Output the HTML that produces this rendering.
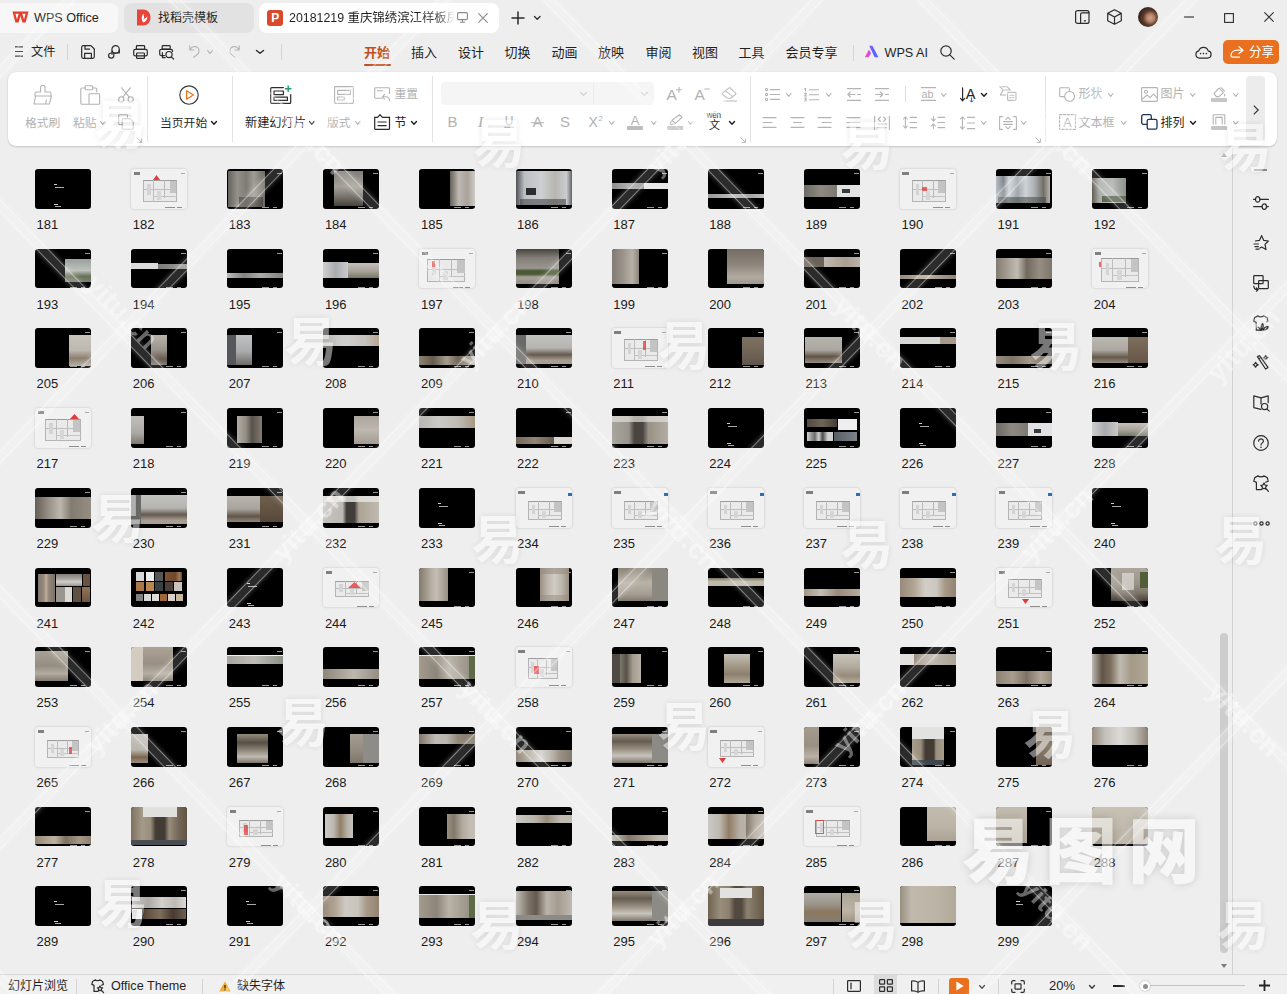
<!DOCTYPE html><html lang="zh-CN"><head><meta charset="utf-8"><title>WPS Office</title><style>
*{box-sizing:border-box}
html,body{margin:0;padding:0}
body{width:1287px;height:994px;overflow:hidden;background:#eee;position:relative;
 font-family:"Liberation Sans","Noto Sans CJK SC",sans-serif;}
.a{position:absolute;display:block}
.t{line-height:20px;white-space:nowrap}
svg{overflow:visible}
.th{position:absolute;width:56px;height:40px;border-radius:3px;overflow:hidden;background:#000}
.th i{position:absolute;display:block}
.th.p{background:#f1f1f1;box-shadow:0 0 2.5px rgba(0,0,0,.2)}
.n{position:absolute;font-size:13px;line-height:14px;color:#1a1a1a}
.g{stroke:#b4b4b4;fill:none;stroke-width:1.1;stroke-linecap:round;stroke-linejoin:round}
.d{stroke:#2b2b2b;fill:none;stroke-width:1.2;stroke-linecap:round;stroke-linejoin:round}
.wm{position:absolute;color:#fff;white-space:nowrap;pointer-events:none}
</style></head><body>
<div class="a" style="left:-8px;top:3px;width:126px;height:30px;background:#f7f7f7;border-radius:8px"></div>
<svg class="a" style="left:12px;top:11px;width:17px;height:12px" viewBox="0 0 17 12" ><path d="M0.5 0.5 H16.5 L13.6 11.5 H10.4 L8.5 5 L6.6 11.5 H3.4 Z M3.4 2.8 L5 8.6 L6.7 2.8 Z M10.3 2.8 L12 8.6 L13.6 2.8 Z" fill="#e2402a" fill-rule="evenodd"/></svg>
<div class="a t" style="left:34px;top:7.5px;font-size:12.6px;color:#1f1f1f;font-weight:400;">WPS Office</div>
<div class="a" style="left:124px;top:3px;width:130px;height:30px;background:#e2e2e2;border-radius:8px"></div>
<svg class="a" style="left:136px;top:9px;width:15px;height:17px" viewBox="0 0 15 17" ><path d="M1 0.5 H7 C11.5 0.5 14.5 3.8 14.5 8.5 C14.5 13.2 11.5 16.5 7 16.5 H1 Z" fill="#e8443a"/><path d="M7 13.5 C5 10 5.5 7 7.3 4.5 C7.8 7 8.6 8 7.6 10.5 C9 9.2 10.4 8.8 11.3 7.3 C11.6 10.6 9.8 12.8 7 13.5Z" fill="#fff"/></svg>
<div class="a t" style="left:158px;top:7.5px;font-size:12px;color:#222;font-weight:400;">找稻壳模板</div>
<div class="a" style="left:259px;top:3px;width:240px;height:30px;background:#fff;border-radius:8px"></div>
<svg class="a" style="left:267px;top:10px;width:16px;height:16px" viewBox="0 0 16 16" ><rect x="0" y="0" width="16" height="16" rx="3" fill="#d94a2c"/><text x="8.3" y="12.4" font-family="Liberation Sans, sans-serif" font-size="12" font-weight="700" fill="#fff" text-anchor="middle">P</text></svg>
<div class="a t" style="left:289px;top:7.5px;width:166px;overflow:hidden;font-size:12.4px;color:#1f1f1f;-webkit-mask-image:linear-gradient(90deg,#000 88%,transparent 100%);mask-image:linear-gradient(90deg,#000 88%,transparent 100%)">20181219 重庆锦绣滨江样板房</div>
<svg class="a" style="left:457px;top:12px;width:11px;height:11px" viewBox="0 0 11 11" ><rect x="0.6" y="0.6" width="9.8" height="7" rx="1.2" fill="none" stroke="#8a8a8a" stroke-width="1.1"/><path d="M5.5 7.6 V10 M3 10.3 H8" stroke="#8a8a8a" stroke-width="1.1" fill="none"/></svg>
<svg class="a" style="left:478px;top:13px;width:10px;height:10px" viewBox="0 0 10 10" ><path d="M0.7 0.7 L9.3 9.3 M9.3 0.7 L0.7 9.3" stroke="#8a8a8a" stroke-width="1.1" stroke-linecap="round"/></svg>
<svg class="a" style="left:510.5px;top:11px;width:14px;height:14px" viewBox="0 0 14 14" ><path d="M7 0.5 V13.5 M0.5 7 H13.5" stroke="#2b2b2b" stroke-width="1.5"/></svg>
<svg class="a" style="left:534px;top:16px;width:6.5px;height:4px" viewBox="0 0 6.5 4" ><path d="M0.5 0.5 L3.25 3.3 L6.0 0.5" fill="none" stroke="#2b2b2b" stroke-width="1.3" stroke-linecap="round" stroke-linejoin="round"/></svg>
<svg class="a" style="left:1075px;top:10px;width:15px;height:14px" viewBox="0 0 15 14" ><rect x="0.6" y="0.6" width="13.4" height="12.8" rx="2" class="d"/><path d="M5.6 13.4 V4.2 a1.4 1.4 0 0 1 1.4 -1.4 H14" class="d"/><path d="M9.2 10.8 H10.6" class="d"/></svg>
<svg class="a" style="left:1106.5px;top:9px;width:15px;height:16px" viewBox="0 0 15 16" ><path d="M7.5 0.7 L14.3 4.3 V11.7 L7.5 15.3 L0.7 11.7 V4.3 Z M0.9 4.4 L7.5 8 L14.1 4.4 M7.5 8 V15.2" class="d" stroke-width="1.15"/></svg>
<div class="a" style="left:1138px;top:7px;width:20px;height:20px;border-radius:50%;background:radial-gradient(circle at 62% 55%,#d0a68c 0,#b58468 22%,#5a3a2c 45%,#2f211c 75%);"></div>
<svg class="a" style="left:1184px;top:16px;width:10px;height:2px" viewBox="0 0 10 2" ><path d="M0 1 H10" stroke="#2b2b2b" stroke-width="1.1"/></svg>
<svg class="a" style="left:1224px;top:12.5px;width:10px;height:10px" viewBox="0 0 10 10" ><rect x="0.6" y="0.6" width="8.8" height="8.8" fill="none" stroke="#2b2b2b" stroke-width="1.1"/></svg>
<svg class="a" style="left:1264px;top:12px;width:10px;height:10px" viewBox="0 0 10 10" ><path d="M0.4 0.4 L9.6 9.6 M9.6 0.4 L0.4 9.6" stroke="#2b2b2b" stroke-width="1.1"/></svg>
<svg class="a" style="left:15px;top:46px;width:8px;height:11px" viewBox="0 0 8 11" ><path d="M0 0.8 H8 M0 5.5 H8 M0 10.2 H8" stroke="#2b2b2b" stroke-width="1.2"/></svg>
<div class="a t" style="left:31px;top:41.5px;font-size:12.2px;color:#1f1f1f;font-weight:400;">文件</div>
<div class="a" style="left:67px;top:44px;width:1px;height:16px;background:#d4d4d4"></div>
<svg class="a" style="left:81px;top:45px;width:14px;height:14px" viewBox="0 0 14 14" ><path d="M0.7 2.2 a1.5 1.5 0 0 1 1.5 -1.5 H10 L13.3 4 V11.8 a1.5 1.5 0 0 1 -1.5 1.5 H2.2 a1.5 1.5 0 0 1 -1.5 -1.5 Z" class="d"/><path d="M3.6 13 V8.4 H10.4 V13 M4 1 V4.2 H8.6" class="d"/></svg>
<svg class="a" style="left:107px;top:45px;width:14px;height:14px" viewBox="0 0 14 14" ><circle cx="8.6" cy="4.4" r="3.7" class="d"/><path d="M5 5.8 V9.2 M12.3 5 V8 H4.2 a2.6 2.6 0 1 0 2.6 2.6 V8" class="d"/></svg>
<svg class="a" style="left:133px;top:45px;width:15px;height:14px" viewBox="0 0 15 14" ><rect x="3.4" y="0.7" width="8.2" height="3.6" rx="0.8" class="d"/><rect x="0.7" y="4.3" width="13.6" height="6.6" rx="1.6" class="d"/><rect x="3.6" y="8" width="7.8" height="5.3" rx="0.6" fill="#eee" class="d"/></svg>
<svg class="a" style="left:158.5px;top:45px;width:16px;height:14px" viewBox="0 0 16 14" ><rect x="3.2" y="0.7" width="8" height="3.4" rx="0.8" class="d"/><path d="M5.5 10.6 H2.2 a1.5 1.5 0 0 1 -1.5 -1.5 V5.8 a1.5 1.5 0 0 1 1.5 -1.5 H12 a1.5 1.5 0 0 1 1.5 1.5 V6.4" class="d"/><path d="M3.4 7.6 V12.6 H6.2" class="d"/><circle cx="10" cy="9.6" r="3.1" class="d"/><path d="M12.3 11.9 L14.6 14" class="d"/></svg>
<svg class="a" style="left:189px;top:45px;width:11px;height:13px" viewBox="0 0 11 13" ><path d="M0.8 0.8 V5 H5 M1 4.8 C2.2 2.4 4.2 1.4 6.2 1.6 C8.8 1.9 10.3 4 10 6.4 C9.7 8.8 7.6 10.6 4.6 12.2" class="g" stroke="#b0b0b0" stroke-width="1.2"/></svg>
<svg class="a" style="left:207px;top:50px;width:6px;height:4px" viewBox="0 0 6 4" ><path d="M0.5 0.5 L3.0 3.3 L5.5 0.5" fill="none" stroke="#b0b0b0" stroke-width="1.1" stroke-linecap="round" stroke-linejoin="round"/></svg>
<svg class="a" style="left:229px;top:45px;width:11px;height:13px" viewBox="0 0 11 13" ><path d="M10.2 0.8 V5 H6 M10 4.8 C8.8 2.4 6.8 1.4 4.8 1.6 C2.2 1.9 0.7 4 1 6.4 C1.3 8.8 3.4 10.6 6.4 12.2" class="g" stroke="#b0b0b0" stroke-width="1.2"/></svg>
<svg class="a" style="left:256px;top:50px;width:8px;height:4px" viewBox="0 0 8 4" ><path d="M0.5 0.5 L4.0 3.3 L7.5 0.5" fill="none" stroke="#2b2b2b" stroke-width="1.4" stroke-linecap="round" stroke-linejoin="round"/></svg>
<div class="a" style="left:281px;top:44px;width:1px;height:16px;background:#d4d4d4"></div>
<div class="a t" style="left:364px;top:43.0px;font-size:13px;color:#c14f1d;font-weight:700;">开始</div>
<div class="a" style="left:364px;top:64px;width:27px;height:2px;background:#c14f1d;border-radius:1px"></div>
<div class="a t" style="left:411px;top:43.0px;font-size:13px;color:#1f1f1f;font-weight:400;">插入</div>
<div class="a t" style="left:458px;top:43.0px;font-size:13px;color:#1f1f1f;font-weight:400;">设计</div>
<div class="a t" style="left:504.5px;top:43.0px;font-size:13px;color:#1f1f1f;font-weight:400;">切换</div>
<div class="a t" style="left:551.5px;top:43.0px;font-size:13px;color:#1f1f1f;font-weight:400;">动画</div>
<div class="a t" style="left:598px;top:43.0px;font-size:13px;color:#1f1f1f;font-weight:400;">放映</div>
<div class="a t" style="left:645.5px;top:43.0px;font-size:13px;color:#1f1f1f;font-weight:400;">审阅</div>
<div class="a t" style="left:692px;top:43.0px;font-size:13px;color:#1f1f1f;font-weight:400;">视图</div>
<div class="a t" style="left:738.5px;top:43.0px;font-size:13px;color:#1f1f1f;font-weight:400;">工具</div>
<div class="a t" style="left:785.5px;top:43.0px;font-size:13px;color:#1f1f1f;font-weight:400;">会员专享</div>
<div class="a" style="left:853px;top:45px;width:1px;height:16px;background:#d4d4d4"></div>
<svg class="a" style="left:864px;top:45px;width:15px;height:13px" viewBox="0 0 15 13" ><defs><linearGradient id="ai1" x1="0" y1="0" x2="1" y2="1"><stop offset="0" stop-color="#7a5cff"/><stop offset="1" stop-color="#3d6bff"/></linearGradient><linearGradient id="ai2" x1="0" y1="0" x2="1" y2="0"><stop offset="0" stop-color="#ff4fa0"/><stop offset="1" stop-color="#c04bff"/></linearGradient></defs><path d="M5.2 0.8 H8.4 L14.4 12.2 H10.6 Z" fill="url(#ai1)"/><path d="M5 4.6 L7 8.2 L4.6 12.2 H0.8 Z" fill="url(#ai2)"/></svg>
<div class="a t" style="left:884.5px;top:42.5px;font-size:12.6px;color:#1f1f1f;font-weight:400;">WPS AI</div>
<svg class="a" style="left:940px;top:45px;width:15px;height:15px" viewBox="0 0 15 15" ><circle cx="6" cy="6" r="5.2" class="d"/><path d="M9.8 9.8 L14.2 14.2" class="d"/></svg>
<svg class="a" style="left:1195px;top:45px;width:17px;height:14px" viewBox="0 0 17 14" ><path d="M4.4 13.2 a3.7 3.7 0 0 1 -0.6 -7.3 a4.9 4.9 0 0 1 9.4 0 a3.7 3.7 0 0 1 -0.6 7.3 Z" class="d"/><circle cx="5.6" cy="8.6" r="0.8" fill="#2b2b2b"/><circle cx="8.5" cy="8.6" r="0.8" fill="#2b2b2b"/><circle cx="11.4" cy="8.6" r="0.8" fill="#2b2b2b"/></svg>
<div class="a" style="left:1223px;top:40px;width:56px;height:24px;background:#e9701e;border-radius:5px"></div>
<svg class="a" style="left:1230px;top:46px;width:14px;height:12px" viewBox="0 0 14 12" ><path d="M9 0.8 L13 4.2 L9 7.6 M12.6 4.2 H7.4 C3.6 4.2 1 6.4 1 9.4 C1 10.6 1.6 11.2 2.6 11.2 H9.4" fill="none" stroke="#fff" stroke-width="1.3" stroke-linecap="round" stroke-linejoin="round"/></svg>
<div class="a t" style="left:1249px;top:42.0px;font-size:12.6px;color:#fff;font-weight:400;">分享</div>
<div class="a" style="left:8px;top:72px;width:1269px;height:74px;background:#fff;border-radius:8px;box-shadow:0 1px 2px rgba(0,0,0,.16),0 0 1px rgba(0,0,0,.12)"></div>
<svg class="a" style="left:33px;top:85px;width:20px;height:20px" viewBox="0 0 20 20" ><path d="M7.6 7 V2.4 a2.2 2.2 0 0 1 4.4 0 V7 H16.6 a1.4 1.4 0 0 1 1.4 1.4 V11 H2 V8.4 A1.4 1.4 0 0 1 3.4 7 Z M2.6 11 L1 19 H16.4 L18.4 11 M12.6 19 L13.4 15" class="g"/></svg>
<div class="a t" style="left:25px;top:112.5px;font-size:11.8px;color:#b2b2b2;font-weight:400;">格式刷</div>
<svg class="a" style="left:79.5px;top:85px;width:21px;height:20px" viewBox="0 0 21 20" ><path d="M9 19.2 H2 a1.2 1.2 0 0 1 -1.2 -1.2 V4.2 A1.2 1.2 0 0 1 2 3 H5.2 M12.6 3 H15.6 a1.2 1.2 0 0 1 1.2 1.2 V7" class="g"/><rect x="5.2" y="0.8" width="7.4" height="4" rx="0.8" class="g"/><rect x="9" y="8.8" width="10.6" height="10.4" rx="0.8" class="g"/></svg>
<div class="a t" style="left:73px;top:112.5px;font-size:11.8px;color:#b2b2b2;font-weight:400;">粘贴</div>
<svg class="a" style="left:100px;top:121px;width:5.5px;height:4px" viewBox="0 0 5.5 4" ><path d="M0.5 0.5 L2.75 3.3 L5.0 0.5" fill="none" stroke="#b4b4b4" stroke-width="1.1" stroke-linecap="round" stroke-linejoin="round"/></svg>
<svg class="a" style="left:118px;top:86.5px;width:16px;height:16px" viewBox="0 0 16 16" ><circle cx="3.3" cy="12.4" r="2.6" class="g"/><circle cx="12.7" cy="12.4" r="2.6" class="g"/><path d="M4.8 10.2 L12.4 0.8 M11.2 10.2 L3.6 0.8" class="g"/></svg>
<svg class="a" style="left:118px;top:113.5px;width:16px;height:16px" viewBox="0 0 16 16" ><path d="M4.2 10.6 H1.6 a0.9 0.9 0 0 1 -0.9 -0.9 V1.6 A0.9 0.9 0 0 1 1.6 0.7 H8.6 a0.9 0.9 0 0 1 0.9 0.9 V3.8" class="g"/><path d="M5.2 4.6 H11.6 L15.3 8.2 V14.4 a0.9 0.9 0 0 1 -0.9 0.9 H5.2 a0.9 0.9 0 0 1 -0.9 -0.9 V5.5 a0.9 0.9 0 0 1 0.9 -0.9 Z" class="g"/></svg>
<svg class="a" style="left:136px;top:137px;width:6px;height:6px" viewBox="0 0 6 6" ><path d="M0.6 0.6 L5.2 5.2 M5.4 1.6 V5.4 H1.6" fill="none" stroke="#b8b8b8" stroke-width="1"/></svg>
<div class="a" style="left:146.5px;top:76px;width:1px;height:66px;background:#e3e3e3"></div>
<svg class="a" style="left:179px;top:85px;width:20px;height:20px" viewBox="0 0 20 20" ><circle cx="10" cy="10" r="9.2" fill="none" stroke="#3a3a3a" stroke-width="1.15"/><path d="M7.6 5.8 V14.2 L14.4 10 Z" fill="none" stroke="#e9701e" stroke-width="1.25" stroke-linejoin="round"/></svg>
<div class="a t" style="left:160px;top:112.5px;font-size:11.8px;color:#1f1f1f;font-weight:400;">当页开始</div>
<svg class="a" style="left:211px;top:121px;width:6px;height:4px" viewBox="0 0 6 4" ><path d="M0.5 0.5 L3.0 3.3 L5.5 0.5" fill="none" stroke="#1f1f1f" stroke-width="1.4" stroke-linecap="round" stroke-linejoin="round"/></svg>
<div class="a" style="left:231.5px;top:76px;width:1px;height:66px;background:#e3e3e3"></div>
<svg class="a" style="left:269.5px;top:85px;width:22px;height:19px" viewBox="0 0 22 19" ><path d="M13.4 2.6 H1.6 a0.9 0.9 0 0 0 -0.9 0.9 V17.4 a0.9 0.9 0 0 0 0.9 0.9 H19.8 a0.9 0.9 0 0 0 0.9 -0.9 V9.6" class="d" stroke="#333" stroke-width="1.25"/><rect x="4" y="6" width="9.4" height="3.6" class="d" stroke="#333" stroke-width="1.15"/><rect x="4" y="12.2" width="13.4" height="3.2" class="d" stroke="#333" stroke-width="1.15"/><path d="M18.2 0.6 V7 M15 3.8 H21.4" stroke="#1f9d6b" stroke-width="1.4" fill="none"/></svg>
<div class="a t" style="left:245px;top:112.5px;font-size:12.2px;color:#1f1f1f;font-weight:400;">新建幻灯片</div>
<svg class="a" style="left:308.5px;top:121px;width:5.5px;height:4px" viewBox="0 0 5.5 4" ><path d="M0.5 0.5 L2.75 3.3 L5.0 0.5" fill="none" stroke="#555" stroke-width="1.2" stroke-linecap="round" stroke-linejoin="round"/></svg>
<svg class="a" style="left:334px;top:86px;width:20px;height:18px" viewBox="0 0 20 18" ><rect x="0.6" y="0.6" width="18.8" height="16.8" rx="0.8" class="g"/><rect x="3.6" y="4.4" width="12.8" height="4" class="g"/><rect x="3.6" y="11" width="6.6" height="3" class="g"/></svg>
<div class="a t" style="left:327px;top:112.5px;font-size:11.8px;color:#b2b2b2;font-weight:400;">版式</div>
<svg class="a" style="left:354.5px;top:121px;width:5.5px;height:4px" viewBox="0 0 5.5 4" ><path d="M0.5 0.5 L2.75 3.3 L5.0 0.5" fill="none" stroke="#b4b4b4" stroke-width="1.1" stroke-linecap="round" stroke-linejoin="round"/></svg>
<svg class="a" style="left:373.5px;top:87px;width:17px;height:15px" viewBox="0 0 17 15" ><path d="M8 11.2 H1.6 a0.9 0.9 0 0 1 -0.9 -0.9 V1.6 A0.9 0.9 0 0 1 1.6 0.7 H14.6 a0.9 0.9 0 0 1 0.9 0.9 V6.4 M3.4 3.8 H8.8" class="g"/><path d="M10.6 7.4 L8.4 9.8 L10.6 12.2 M8.6 9.8 H12 C14.2 9.8 15.4 11.4 15.8 14" class="g"/></svg>
<div class="a t" style="left:394.5px;top:84.0px;font-size:11.8px;color:#b2b2b2;font-weight:400;">重置</div>
<svg class="a" style="left:373.5px;top:113.5px;width:17px;height:16px" viewBox="0 0 17 16" ><path d="M0.7 3.2 V14.4 a0.9 0.9 0 0 0 0.9 0.9 H14.6 a0.9 0.9 0 0 0 0.9 -0.9 V3.2 M0.7 3.4 H3.6 L6 0.7 L8.4 3.4 H15.5 M4 8 H12.2 M4 11.6 H12.2" class="d" stroke="#222" stroke-width="1.3"/></svg>
<div class="a t" style="left:394.5px;top:112.5px;font-size:12px;color:#1f1f1f;font-weight:400;">节</div>
<svg class="a" style="left:411px;top:121px;width:6px;height:4px" viewBox="0 0 6 4" ><path d="M0.5 0.5 L3.0 3.3 L5.5 0.5" fill="none" stroke="#1f1f1f" stroke-width="1.4" stroke-linecap="round" stroke-linejoin="round"/></svg>
<div class="a" style="left:432px;top:76px;width:1px;height:66px;background:#e3e3e3"></div>
<div class="a" style="left:441px;top:82px;width:213px;height:23px;background:#f5f5f5;border-radius:4px"></div>
<div class="a" style="left:593px;top:83px;width:1px;height:21px;background:#ececec"></div>
<svg class="a" style="left:580px;top:92px;width:7px;height:4px" viewBox="0 0 7 4" ><path d="M0.5 0.5 L3.5 3.3 L6.5 0.5" fill="none" stroke="#d0d0d0" stroke-width="1.1" stroke-linecap="round" stroke-linejoin="round"/></svg>
<svg class="a" style="left:641px;top:92px;width:7px;height:4px" viewBox="0 0 7 4" ><path d="M0.5 0.5 L3.5 3.3 L6.5 0.5" fill="none" stroke="#d0d0d0" stroke-width="1.1" stroke-linecap="round" stroke-linejoin="round"/></svg>
<svg class="a" style="left:448px;top:116px;width:9px;height:11px" viewBox="0 0 9 11" ><text x="-0.6" y="10.8" font-family="Liberation Sans, sans-serif" font-size="15" fill="#b2b2b2">B</text></svg>
<svg class="a" style="left:476.5px;top:116px;width:9px;height:11px" viewBox="0 0 9 11" ><text x="1" y="10.6" font-family="Liberation Serif, serif" font-style="italic" font-size="15.5" fill="#b2b2b2">I</text></svg>
<svg class="a" style="left:504px;top:116px;width:10px;height:12px" viewBox="0 0 10 12" ><text x="5" y="8.8" font-family="Liberation Sans, sans-serif" font-size="12" fill="#b2b2b2" text-anchor="middle">U</text><path d="M0.4 11.2 H9.6" class="g"/></svg>
<svg class="a" style="left:531px;top:116px;width:13px;height:12px" viewBox="0 0 13 12" ><text x="6.5" y="11" font-family="Liberation Sans, sans-serif" font-size="14.5" fill="#b2b2b2" text-anchor="middle">A</text><path d="M0.4 6.8 H12.6" class="g"/></svg>
<svg class="a" style="left:559.5px;top:116px;width:10px;height:11px" viewBox="0 0 10 11" ><text x="5" y="10.8" font-family="Liberation Sans, sans-serif" font-size="15" fill="#b2b2b2" text-anchor="middle">S</text></svg>
<svg class="a" style="left:588.5px;top:115px;width:14px;height:12px" viewBox="0 0 14 12" ><text x="-0.4" y="11.8" font-family="Liberation Sans, sans-serif" font-size="14" fill="#b2b2b2">X</text><text x="9.4" y="5.6" font-family="Liberation Sans, sans-serif" font-size="7.5" fill="#b2b2b2">2</text></svg>
<svg class="a" style="left:608.5px;top:121px;width:5.5px;height:4px" viewBox="0 0 5.5 4" ><path d="M0.5 0.5 L2.75 3.3 L5.0 0.5" fill="none" stroke="#b4b4b4" stroke-width="1.1" stroke-linecap="round" stroke-linejoin="round"/></svg>
<svg class="a" style="left:628px;top:114.5px;width:14px;height:10px" viewBox="0 0 14 10" ><text x="7" y="9.8" font-family="Liberation Sans, sans-serif" font-size="13" fill="#b2b2b2" text-anchor="middle">A</text></svg>
<div class="a" style="left:627px;top:125.5px;width:16px;height:4px;background:#bdbdbd;border-radius:1px"></div>
<svg class="a" style="left:650.5px;top:121px;width:5.5px;height:4px" viewBox="0 0 5.5 4" ><path d="M0.5 0.5 L2.75 3.3 L5.0 0.5" fill="none" stroke="#b4b4b4" stroke-width="1.1" stroke-linecap="round" stroke-linejoin="round"/></svg>
<svg class="a" style="left:667px;top:87px;width:15px;height:13px" viewBox="0 0 15 13" ><text x="-0.4" y="12.6" font-family="Liberation Sans, sans-serif" font-size="15.5" fill="#b2b2b2">A</text><path d="M12 0.4 V5.2 M9.6 2.8 H14.4" class="g" stroke-width="0.9"/></svg>
<svg class="a" style="left:695px;top:87px;width:15px;height:13px" viewBox="0 0 15 13" ><text x="-0.4" y="12.6" font-family="Liberation Sans, sans-serif" font-size="15.5" fill="#b2b2b2">A</text><path d="M9.8 2 H14.2" class="g" stroke-width="0.9"/></svg>
<svg class="a" style="left:720.5px;top:86.5px;width:17px;height:15px" viewBox="0 0 17 15" ><path d="M6.2 11.2 L1.4 7.4 a0.8 0.8 0 0 1 0 -1.2 L8 0.9 a0.9 0.9 0 0 1 1.2 0.1 L14.6 6.2 a0.8 0.8 0 0 1 -0.1 1.2 L9.6 11.2 Z M4.6 3.8 L11.6 9.6 M3 14 H15.6" class="g"/></svg>
<svg class="a" style="left:667px;top:113.5px;width:16px;height:11px" viewBox="0 0 16 11" ><path d="M3 10 L5 6.2 L12.6 0.8 L15 3.4 L8.4 9.4 L4.6 10.6 Z M5 6.2 L8.4 9.4" class="g"/></svg>
<div class="a" style="left:667px;top:125.5px;width:16px;height:4px;background:#c4c4c4;border-radius:1px"></div>
<svg class="a" style="left:688px;top:121px;width:5.5px;height:4px" viewBox="0 0 5.5 4" ><path d="M0.5 0.5 L2.75 3.3 L5.0 0.5" fill="none" stroke="#b4b4b4" stroke-width="1.1" stroke-linecap="round" stroke-linejoin="round"/></svg>
<div class="a t" style="left:706.5px;top:106.0px;font-size:8.2px;color:#1f1f1f;font-weight:400;letter-spacing:-.2px">wén</div>
<div class="a t" style="left:709px;top:115.0px;font-size:11px;color:#1f1f1f;font-weight:400;">文</div>
<svg class="a" style="left:728.5px;top:121px;width:6px;height:4px" viewBox="0 0 6 4" ><path d="M0.5 0.5 L3.0 3.3 L5.5 0.5" fill="none" stroke="#1f1f1f" stroke-width="1.4" stroke-linecap="round" stroke-linejoin="round"/></svg>
<svg class="a" style="left:740px;top:137px;width:6px;height:6px" viewBox="0 0 6 6" ><path d="M0.6 0.6 L5.2 5.2 M5.4 1.6 V5.4 H1.6" fill="none" stroke="#b8b8b8" stroke-width="1"/></svg>
<div class="a" style="left:749.5px;top:76px;width:1px;height:66px;background:#e3e3e3"></div>
<svg class="a" style="left:764.5px;top:88px;width:15px;height:13px" viewBox="0 0 15 13" ><circle cx="1.6" cy="1.6" r="1.1" class="g" stroke-width="0.9"/><circle cx="1.6" cy="6.5" r="1.1" class="g" stroke-width="0.9"/><circle cx="1.6" cy="11.4" r="1.1" class="g" stroke-width="0.9"/><path d="M5.4 1.6 H14.6 M5.4 6.5 H14.6 M5.4 11.4 H14.6" class="g"/></svg>
<svg class="a" style="left:785.5px;top:93px;width:5.5px;height:4px" viewBox="0 0 5.5 4" ><path d="M0.5 0.5 L2.75 3.3 L5.0 0.5" fill="none" stroke="#b4b4b4" stroke-width="1.1" stroke-linecap="round" stroke-linejoin="round"/></svg>
<svg class="a" style="left:804px;top:87.5px;width:15px;height:14px" viewBox="0 0 15 14" ><path d="M0.6 1 L1.6 0.4 V3 M0.6 5.6 C0.8 4.8 2.4 4.8 2.4 5.8 C2.4 6.6 0.8 7.4 0.6 8 H2.6 M0.6 10 H2.4 L1.4 11.2 C2.8 11.2 2.8 13.2 0.6 13" class="g" stroke-width="0.8"/><path d="M5.4 1.8 H14.6 M5.4 6.8 H14.6 M5.4 11.8 H14.6" class="g"/></svg>
<svg class="a" style="left:826px;top:93px;width:5.5px;height:4px" viewBox="0 0 5.5 4" ><path d="M0.5 0.5 L2.75 3.3 L5.0 0.5" fill="none" stroke="#b4b4b4" stroke-width="1.1" stroke-linecap="round" stroke-linejoin="round"/></svg>
<svg class="a" style="left:846.5px;top:88px;width:14px;height:13px" viewBox="0 0 14 13" ><path d="M0.4 0.6 H13.6 M0.4 12.4 H13.6 M1 6.5 H8 M3.4 4 L0.8 6.5 L3.4 9 M10.4 6.5 H13.6" class="g"/></svg>
<svg class="a" style="left:874.5px;top:88px;width:14px;height:13px" viewBox="0 0 14 13" ><path d="M0.4 0.6 H13.6 M0.4 12.4 H13.6 M0.6 6.5 H7.6 M5.2 4 L7.8 6.5 L5.2 9 M10.4 6.5 H13.6" class="g"/></svg>
<div class="a" style="left:904.5px;top:85.5px;width:1px;height:16.5px;background:#dcdcdc"></div>
<svg class="a" style="left:920.5px;top:87px;width:15px;height:14px" viewBox="0 0 15 14" ><path d="M0.4 0.6 H14.6 M0.4 13.4 H14.6" class="g"/></svg>
<div class="a t" style="left:921.5px;top:84.0px;font-size:10.8px;color:#b0b0b0;font-weight:400;">ab</div>
<svg class="a" style="left:941px;top:93px;width:5.5px;height:4px" viewBox="0 0 5.5 4" ><path d="M0.5 0.5 L2.75 3.3 L5.0 0.5" fill="none" stroke="#b4b4b4" stroke-width="1.1" stroke-linecap="round" stroke-linejoin="round"/></svg>
<svg class="a" style="left:959.5px;top:86.5px;width:17px;height:16px" viewBox="0 0 17 16" ><path d="M2.6 0.8 V13.8 M0.5 11.4 L2.6 13.9 L4.7 11.4" class="d" stroke="#222" stroke-width="1.2"/><text x="10.6" y="11.6" font-family="Liberation Sans, sans-serif" font-size="14.5" fill="#222" text-anchor="middle">A</text><path d="M11.6 10.4 V15 M10 13.4 L11.6 15.2 L13.2 13.4" fill="none" stroke="#2a62d4" stroke-width="1"/></svg>
<svg class="a" style="left:981px;top:93px;width:6px;height:4px" viewBox="0 0 6 4" ><path d="M0.5 0.5 L3.0 3.3 L5.5 0.5" fill="none" stroke="#1f1f1f" stroke-width="1.4" stroke-linecap="round" stroke-linejoin="round"/></svg>
<svg class="a" style="left:999px;top:86px;width:18px;height:15px" viewBox="0 0 18 15" ><path d="M0.8 0.7 H8 L11.4 4 H4.2 Z M4.2 4 L1.4 9 H6.8" class="g"/><rect x="8.6" y="6.4" width="8.4" height="8" rx="0.8" class="g"/><path d="M10.6 9.2 H15 M10.6 11.8 H15" class="g"/></svg>
<svg class="a" style="left:763px;top:116.5px;width:13px;height:11px" viewBox="0 0 13 11" ><path d="M0 0.6 H13 M0 5.5 H9 M0 10.4 H13 " class="g"/></svg>
<svg class="a" style="left:790.5px;top:116.5px;width:13px;height:11px" viewBox="0 0 13 11" ><path d="M0 0.6 H13 M2.5 5.5 H10.5 M0 10.4 H13 " class="g"/></svg>
<svg class="a" style="left:818px;top:116.5px;width:13px;height:11px" viewBox="0 0 13 11" ><path d="M0 0.6 H13 M4 5.5 H13 M0 10.4 H13 " class="g"/></svg>
<svg class="a" style="left:846.5px;top:116.5px;width:13px;height:11px" viewBox="0 0 13 11" ><path d="M0 0.6 H13 M0 5.5 H13 M0 10.4 H13 " class="g"/></svg>
<svg class="a" style="left:874px;top:115.5px;width:16px;height:14px" viewBox="0 0 16 14" ><path d="M0.6 0.4 V13.6 M15.4 0.4 V13.6 M3.6 8 H12.4 M3.6 11.8 H12.4 M6.4 1 L4.2 3.2 L6.4 5.4 M9.6 1 L11.8 3.2 L9.6 5.4" class="g"/></svg>
<svg class="a" style="left:903px;top:116px;width:14px;height:13px" viewBox="0 0 14 13" ><path d="M2.4 1 V12 M0.4 3 L2.4 0.8 L4.4 3 M0.4 10 L2.4 12.2 L4.4 10 M7 1.4 H13.6 M7 6.5 H13.6 M7 11.6 H13.6" class="g"/></svg>
<svg class="a" style="left:931px;top:116px;width:14px;height:13px" viewBox="0 0 14 13" ><path d="M2.4 0.6 V5 M0.4 3 L2.4 5.2 L4.4 3 M2.4 12.4 V8 M0.4 10 L2.4 7.8 L4.4 10 M7 1.4 H13.6 M7 6.5 H13.6 M7 11.6 H13.6" class="g"/></svg>
<svg class="a" style="left:960px;top:115.5px;width:15px;height:14px" viewBox="0 0 15 14" ><path d="M2.4 1 V13 M0.4 3 L2.4 0.8 L4.4 3 M0.4 11 L2.4 13.2 L4.4 11 M7.4 1.4 H14.6 M7.4 7 H14.6 M7.4 12.6 H14.6" class="g"/></svg>
<svg class="a" style="left:981px;top:121px;width:5.5px;height:4px" viewBox="0 0 5.5 4" ><path d="M0.5 0.5 L2.75 3.3 L5.0 0.5" fill="none" stroke="#b4b4b4" stroke-width="1.1" stroke-linecap="round" stroke-linejoin="round"/></svg>
<svg class="a" style="left:999px;top:115.5px;width:18px;height:14px" viewBox="0 0 18 14" ><path d="M3.4 0.6 H0.6 V13.4 H3.4 M14.6 0.6 H17.4 V13.4 H14.6 M4.6 5.6 H13.4 M4.6 8.4 H13.4 M6.8 3.4 L9 1.2 L11.2 3.4 M6.8 10.6 L9 12.8 L11.2 10.6" class="g"/></svg>
<svg class="a" style="left:1021px;top:121px;width:5.5px;height:4px" viewBox="0 0 5.5 4" ><path d="M0.5 0.5 L2.75 3.3 L5.0 0.5" fill="none" stroke="#b4b4b4" stroke-width="1.1" stroke-linecap="round" stroke-linejoin="round"/></svg>
<svg class="a" style="left:1035px;top:137px;width:6px;height:6px" viewBox="0 0 6 6" ><path d="M0.6 0.6 L5.2 5.2 M5.4 1.6 V5.4 H1.6" fill="none" stroke="#b8b8b8" stroke-width="1"/></svg>
<div class="a" style="left:1044.5px;top:76px;width:1px;height:66px;background:#e3e3e3"></div>
<svg class="a" style="left:1059px;top:86.5px;width:17px;height:15px" viewBox="0 0 17 15" ><path d="M5.6 9.6 H1.6 a0.9 0.9 0 0 1 -0.9 -0.9 V1.6 A0.9 0.9 0 0 1 1.6 0.7 H9.4 a0.9 0.9 0 0 1 0.9 0.9 V4.4" class="g"/><circle cx="10.6" cy="9.4" r="4.9" class="g"/></svg>
<div class="a t" style="left:1078.5px;top:84.0px;font-size:12px;color:#b2b2b2;font-weight:400;">形状</div>
<svg class="a" style="left:1108px;top:93px;width:5.5px;height:4px" viewBox="0 0 5.5 4" ><path d="M0.5 0.5 L2.75 3.3 L5.0 0.5" fill="none" stroke="#b4b4b4" stroke-width="1.1" stroke-linecap="round" stroke-linejoin="round"/></svg>
<svg class="a" style="left:1059px;top:114px;width:17px;height:16px" viewBox="0 0 17 16" ><rect x="0.6" y="0.6" width="15.8" height="14.8" class="g" stroke-dasharray="2.2 1.6"/><text x="8.5" y="12.6" font-family="Liberation Sans, sans-serif" font-size="12.5" fill="#b2b2b2" text-anchor="middle">A</text></svg>
<div class="a t" style="left:1078.5px;top:112.5px;font-size:12px;color:#b2b2b2;font-weight:400;">文本框</div>
<svg class="a" style="left:1120.5px;top:121px;width:5.5px;height:4px" viewBox="0 0 5.5 4" ><path d="M0.5 0.5 L2.75 3.3 L5.0 0.5" fill="none" stroke="#b4b4b4" stroke-width="1.1" stroke-linecap="round" stroke-linejoin="round"/></svg>
<svg class="a" style="left:1141px;top:86.5px;width:17px;height:15px" viewBox="0 0 17 15" ><rect x="0.6" y="0.6" width="15.8" height="13.8" rx="0.9" class="g"/><circle cx="5" cy="4.8" r="1.5" class="g"/><path d="M1 12.4 L6 8 L9 10.6 L12.4 7.2 L16.2 10.8" class="g"/></svg>
<div class="a t" style="left:1160.5px;top:84.0px;font-size:12px;color:#b2b2b2;font-weight:400;">图片</div>
<svg class="a" style="left:1190px;top:93px;width:5.5px;height:4px" viewBox="0 0 5.5 4" ><path d="M0.5 0.5 L2.75 3.3 L5.0 0.5" fill="none" stroke="#b4b4b4" stroke-width="1.1" stroke-linecap="round" stroke-linejoin="round"/></svg>
<svg class="a" style="left:1141px;top:114px;width:17px;height:16px" viewBox="0 0 17 16" ><rect x="0.7" y="0.7" width="9.6" height="9.6" rx="1.6" fill="#fff" stroke="#1d3557" stroke-width="1.3"/><rect x="6.2" y="5.4" width="9.8" height="9.8" rx="1.6" fill="#fff" stroke="#1d3557" stroke-width="1.3"/></svg>
<div class="a t" style="left:1160.5px;top:112.5px;font-size:12px;color:#1f1f1f;font-weight:400;">排列</div>
<svg class="a" style="left:1190px;top:121px;width:6px;height:4px" viewBox="0 0 6 4" ><path d="M0.5 0.5 L3.0 3.3 L5.5 0.5" fill="none" stroke="#1f1f1f" stroke-width="1.4" stroke-linecap="round" stroke-linejoin="round"/></svg>
<svg class="a" style="left:1212px;top:86.5px;width:14px;height:10px" viewBox="0 0 14 10" ><path d="M2 6.4 L7 1.2 L11.4 5.6 L7 9.6 H4.4 Z M9 0.6 L12.4 4 M12.6 7.4 V9" class="g"/></svg>
<div class="a" style="left:1211px;top:97.5px;width:16px;height:4px;background:#c6c6c6;border-radius:1px"></div>
<svg class="a" style="left:1232.5px;top:93px;width:5.5px;height:4px" viewBox="0 0 5.5 4" ><path d="M0.5 0.5 L2.75 3.3 L5.0 0.5" fill="none" stroke="#b4b4b4" stroke-width="1.1" stroke-linecap="round" stroke-linejoin="round"/></svg>
<svg class="a" style="left:1212px;top:114px;width:14px;height:10px" viewBox="0 0 14 10" ><path d="M1.2 10 V0.7 H12.8 V10 M3.8 10 V3.4 H10.2 V10" class="g"/></svg>
<div class="a" style="left:1211px;top:125.5px;width:16px;height:4px;background:#c6c6c6;border-radius:1px"></div>
<svg class="a" style="left:1232.5px;top:121px;width:5.5px;height:4px" viewBox="0 0 5.5 4" ><path d="M0.5 0.5 L2.75 3.3 L5.0 0.5" fill="none" stroke="#b4b4b4" stroke-width="1.1" stroke-linecap="round" stroke-linejoin="round"/></svg>
<div class="a" style="left:1246px;top:76px;width:19px;height:65px;background:#ececec;border-radius:4px"></div>
<svg class="a" style="left:1253px;top:104.5px;width:6px;height:10px" viewBox="0 0 6 10" ><path d="M0.8 0.6 L5.2 5 L0.8 9.4" fill="none" stroke="#333" stroke-width="1.2"/></svg>
<div class="a" style="left:1232px;top:148px;width:1px;height:827px;background:#d2d2d2"></div>
<svg class="a" style="left:1220.5px;top:153px;width:6px;height:4px" viewBox="0 0 6 4" ><path d="M0 4 L3 0 L6 4 Z" fill="#7a7a7a"/></svg>
<svg class="a" style="left:1220.5px;top:964px;width:6px;height:4px" viewBox="0 0 6 4" ><path d="M0 0 L3 4 L6 0 Z" fill="#7a7a7a"/></svg>
<div class="a" style="left:1220px;top:633px;width:7.5px;height:320px;background:#cdcdcd;border-radius:4px"></div>
<div class="a" style="left:1254px;top:169px;width:13px;height:2px;background:#8c8c8c"></div>
<svg class="a" style="left:1252.5px;top:196px;width:16px;height:14px" viewBox="0 0 16 14" ><path d="M0.6 3.4 H2.4 M7 3.4 H15.4 M0.6 10.6 H9 M13.6 10.6 H15.4" class="d"/><ellipse cx="4.7" cy="3.4" rx="2.2" ry="2.8" class="d"/><ellipse cx="11.3" cy="10.6" rx="2.2" ry="2.8" class="d"/></svg>
<svg class="a" style="left:1252.5px;top:235px;width:16px;height:16px" viewBox="0 0 16 16" ><path d="M8.6 0.8 L10.8 5.4 L15.4 6 L12 9.4 L13 14.6 L8.6 12 L7 13" class="d"/><path d="M8.6 0.8 L6.4 5.4 L2.4 6 M1 9 H5.4 M2 11.6 H5.4 M3 14.2 H6" class="d"/></svg>
<svg class="a" style="left:1252.5px;top:275px;width:16px;height:16px" viewBox="0 0 16 16" ><rect x="0.7" y="0.7" width="9.4" height="8" rx="0.8" class="d"/><rect x="5.6" y="5.6" width="9.7" height="8" rx="0.8" fill="#eee" class="d"/><path d="M0.8 11 C0.8 13.4 2 14.6 4.8 14.6 M3.4 12.8 L5.2 14.6 L3.4 16.2" class="d"/></svg>
<svg class="a" style="left:1252.5px;top:315px;width:17px;height:16px" viewBox="0 0 17 16" ><path d="M8 15.2 H3.2 V7.4 L0.8 6.2 L1.6 2.6 L5 0.8 C6 2.2 9.6 2.2 10.6 0.8 L14 2.6 L14.8 6.2 L13.6 6.8" class="d"/><path d="M8.6 15 C7.6 12.4 8 10.4 9.6 8.6 C10.6 10.6 10.6 12.6 8.6 15 Z M10 15.2 C11 12.8 12.8 11.6 15.2 11.4 C15 13.6 13 15 10 15.2 Z M7.4 15.2 C7.2 13.6 6.4 12.6 5 12.2" class="d" stroke-width="1"/></svg>
<svg class="a" style="left:1252.5px;top:354.5px;width:17px;height:16px" viewBox="0 0 17 16" ><path d="M4.4 1.6 L6.6 0.6 L15 12.4 L12.6 14 Z M6 3.6 L8 2.4" class="d"/><path d="M12.6 0.6 L13.4 2 L14.8 2.6 L13.4 3.2 L12.6 4.6 L11.8 3.2 L10.4 2.6 L11.8 2 Z M2.6 7.4 L3.6 9 L5.2 9.8 L3.6 10.6 L2.6 12.2 L1.6 10.6 L0.2 9.8 L1.6 9 Z" class="d" stroke-width="1"/></svg>
<svg class="a" style="left:1252.5px;top:395px;width:17px;height:17px" viewBox="0 0 17 17" ><path d="M8 14.4 L0.8 12.6 V0.8 L8 2.8 L15.2 0.8 V7.6 M8 2.8 V9" class="d"/><circle cx="11.6" cy="11.6" r="3.1" class="d"/><path d="M13.9 13.9 L16.2 16.2" class="d"/></svg>
<svg class="a" style="left:1252.5px;top:435px;width:16px;height:16px" viewBox="0 0 16 16" ><circle cx="8" cy="8" r="7.3" class="d"/><path d="M5.6 6.2 C5.6 3.2 10.4 3.2 10.4 6.2 C10.4 7.8 8 8 8 10" class="d"/><circle cx="8" cy="12.2" r="0.8" fill="#2b2b2b"/></svg>
<svg class="a" style="left:1252.5px;top:475px;width:17px;height:17px" viewBox="0 0 17 17" ><path d="M8.4 14.6 H3.4 V7.4 L0.8 6.2 L1.8 2.6 L5.2 0.8 C6.2 2.2 9.8 2.2 10.8 0.8 L14.2 2.6 L15.2 6.2 L12.6 7.2" class="d"/><path d="M11 8 L12 10 L14.2 10.4 L12.6 12 L13 14.2 L11 13.2 L9 14.2 L9.4 12 L7.8 10.4 L10 10 Z M13.4 14 L15.4 16.4" class="d" stroke-width="1"/></svg>
<svg class="a" style="left:1252.5px;top:521px;width:17px;height:5px" viewBox="0 0 17 5" ><circle cx="2.4" cy="2.5" r="1.6" class="d" stroke-width="0.9"/><circle cx="8.5" cy="2.5" r="1.6" class="d" stroke-width="0.9"/><circle cx="14.6" cy="2.5" r="1.6" class="d" stroke-width="0.9"/></svg>
<div class="a" style="left:0;top:974px;width:1287px;height:20px;background:#f0f0f0;border-top:1px solid #d6d6d6"></div>
<div class="a t" style="left:8px;top:976.0px;font-size:12px;color:#1f1f1f;font-weight:400;">幻灯片浏览</div>
<div class="a" style="left:76px;top:979px;width:1px;height:15px;background:#d4d4d4"></div>
<svg class="a" style="left:91px;top:979px;width:14px;height:14px" viewBox="0 0 14 14" ><path d="M6.6 12.4 H3 V6.4 L0.8 5.4 L1.6 2.4 L4.4 0.8 C5.2 2 8 2 8.8 0.8 L11.6 2.4 L12.4 5.4 L10.6 6.2" class="d" stroke-width="1"/><path d="M9 7 L9.8 8.6 L11.6 8.9 L10.3 10.2 L10.6 12 L9 11.2 L7.4 12 L7.7 10.2 L6.4 8.9 L8.2 8.6 Z M11 11.8 L12.6 13.6" class="d" stroke-width="0.9"/></svg>
<div class="a t" style="left:111px;top:976.0px;font-size:12.6px;color:#1f1f1f;font-weight:400;">Office Theme</div>
<div class="a" style="left:202px;top:979px;width:1px;height:15px;background:#d4d4d4"></div>
<svg class="a" style="left:219px;top:981px;width:12px;height:11px" viewBox="0 0 12 11" ><path d="M6 0.4 L11.8 10.6 H0.2 Z" fill="#f0a92a"/><path d="M6 4 V7.4" stroke="#222" stroke-width="1.3"/><circle cx="6" cy="9" r="0.8" fill="#222"/></svg>
<div class="a t" style="left:237px;top:976.0px;font-size:12px;color:#1f1f1f;font-weight:400;">缺失字体</div>
<div class="a" style="left:833px;top:979px;width:1px;height:15px;background:#d4d4d4"></div>
<svg class="a" style="left:847px;top:980px;width:14px;height:12px" viewBox="0 0 14 12" ><rect x="0.6" y="0.6" width="12.8" height="10.8" rx="0.8" class="d"/><path d="M4 3.2 V8.8" class="d"/></svg>
<div class="a" style="left:874px;top:975px;width:23px;height:19px;background:#dcdcdc"></div>
<svg class="a" style="left:879px;top:979px;width:14px;height:13px" viewBox="0 0 14 13" ><rect x="0.6" y="0.6" width="5" height="4.6" rx="0.6" class="d"/><rect x="8.4" y="0.6" width="5" height="4.6" rx="0.6" class="d"/><rect x="0.6" y="7.8" width="5" height="4.6" rx="0.6" class="d"/><rect x="8.4" y="7.8" width="5" height="4.6" rx="0.6" class="d"/></svg>
<svg class="a" style="left:911px;top:980px;width:14px;height:13px" viewBox="0 0 14 13" ><path d="M7 2.4 C5 0.8 2.8 0.6 0.6 1 V11 C2.8 10.6 5 10.8 7 12.4 C9 10.8 11.2 10.6 13.4 11 V1 C11.2 0.6 9 0.8 7 2.4 Z M7 2.4 V12.2" class="d"/></svg>
<div class="a" style="left:938px;top:979px;width:1px;height:15px;background:#d4d4d4"></div>
<div class="a" style="left:949px;top:977.5px;width:20px;height:20px;background:#e9701e;border-radius:3px"></div>
<svg class="a" style="left:956px;top:981px;width:8px;height:10px" viewBox="0 0 8 10" ><path d="M0.4 0.4 L7.6 5 L0.4 9.6 Z" fill="#fff"/></svg>
<svg class="a" style="left:978.5px;top:985px;width:6px;height:4px" viewBox="0 0 6 4" ><path d="M0.5 0.5 L3.0 3.3 L5.5 0.5" fill="none" stroke="#333" stroke-width="1.3" stroke-linecap="round" stroke-linejoin="round"/></svg>
<div class="a" style="left:998px;top:979px;width:1px;height:15px;background:#d4d4d4"></div>
<svg class="a" style="left:1011px;top:980px;width:14px;height:13px" viewBox="0 0 14 13" ><path d="M0.7 4 V2 A1.3 1.3 0 0 1 2 0.7 H4 M10 0.7 H12 A1.3 1.3 0 0 1 13.3 2 V4 M13.3 9 V11 A1.3 1.3 0 0 1 12 12.3 H10 M4 12.3 H2 A1.3 1.3 0 0 1 0.7 11 V9" class="d"/><rect x="4" y="3.8" width="6" height="5.4" rx="0.6" class="d"/></svg>
<div class="a t" style="left:1049px;top:975.5px;font-size:13px;color:#1f1f1f;font-weight:400;">20%</div>
<svg class="a" style="left:1089px;top:985px;width:6px;height:4px" viewBox="0 0 6 4" ><path d="M0.5 0.5 L3.0 3.3 L5.5 0.5" fill="none" stroke="#333" stroke-width="1.3" stroke-linecap="round" stroke-linejoin="round"/></svg>
<div class="a" style="left:1113px;top:985px;width:12px;height:2px;background:#222"></div>
<div class="a" style="left:1148px;top:985px;width:97px;height:1.4px;background:#c4c4c4"></div>
<div class="a" style="left:1140px;top:981px;width:10px;height:10px;border-radius:50%;background:#fff;box-shadow:0 0 2px rgba(0,0,0,.35)"></div>
<div class="a" style="left:1142.5px;top:983.5px;width:5px;height:5px;border-radius:50%;background:#8c8c8c"></div>
<svg class="a" style="left:1259px;top:980px;width:11px;height:11px" viewBox="0 0 11 11" ><path d="M5.5 0 V11 M0 5.5 H11" stroke="#222" stroke-width="1.8"/></svg>
<div class="th" style="left:35.0px;top:169px;height:40px"><i style="left:19px;top:15px;width:3px;height:1px;background:#ccc"></i><i style="left:20px;top:18px;width:9px;height:1px;background:#aaa"></i><i style="left:19px;top:35px;width:4px;height:1px;background:#ccc"></i><i style="left:20px;top:37px;width:6px;height:1px;background:#aaa"></i></div><div class="n" style="left:36.6px;top:218px;color:#1a1a1a">181</div>
<div class="th p" style="left:131.1px;top:169px;height:40px"><i style="left:2.5px;top:2.5px;width:6.5px;height:3.5px;background:#808080"></i><i style="left:12px;top:11px;width:34px;height:22px;border:1px solid #b4b4b4;border-top:1.5px solid #9c9c9c;background:#eaeaea"></i><i style="left:22.2px;top:11px;width:1px;height:22px;background:#bdbdbd"></i><i style="left:33.08px;top:11px;width:1px;height:17.6px;background:#b8b8b8"></i><i style="left:12px;top:20.240000000000002px;width:27.200000000000003px;height:1px;background:#bdbdbd"></i><i style="left:22.2px;top:26.84px;width:23.799999999999997px;height:1px;background:#c2c2c2"></i><i style="left:16.08px;top:15.4px;width:3.4000000000000004px;height:11.0px;background:#d4d4d4"></i><i style="left:38.519999999999996px;top:12px;width:6.800000000000001px;height:12.100000000000001px;background:#c4c4c4"></i><i style="left:26.28px;top:22.0px;width:4.08px;height:8.8px;background:#d6d6d6"></i><i style="left:33.5px;top:38px;width:10px;height:1.3px;background:#8e8e8e"></i><i style="left:45.5px;top:38px;width:5px;height:1.3px;background:#8e8e8e"></i><i style="left:50px;top:4px;width:4px;height:1px;background:#aaa"></i><svg style="position:absolute;left:22px;top:6px;width:7px;height:5px" viewBox="0 0 10 10" preserveAspectRatio="none"><path d="M0 10 L5 0 L10 10 Z" fill="#e23b3b"/></svg></div><div class="n" style="left:132.7px;top:218px;color:#1a1a1a">182</div>
<div class="th" style="left:227.2px;top:169px;height:40px"><i style="left:50px;top:4px;width:5px;height:1px;background:#9a9a9a"></i><i style="left:35px;top:38px;width:7px;height:1px;background:#9a9a9a"></i><i style="left:46px;top:38px;width:4px;height:1px;background:#9a9a9a"></i><i style="left:1px;top:2px;width:37px;height:36px;background:linear-gradient(90deg,#6f6c67,#a29e97 25%,#8b8781 50%,#b0aca5 70%,#77736d);filter:brightness(.91)"></i><i style="left:12px;top:28px;width:24px;height:10px;background:rgba(40,36,32,.45)"></i></div><div class="n" style="left:228.79999999999998px;top:218px;color:#1a1a1a">183</div>
<div class="th" style="left:323.3px;top:169px;height:40px"><i style="left:50px;top:4px;width:5px;height:1px;background:#9a9a9a"></i><i style="left:35px;top:38px;width:7px;height:1px;background:#9a9a9a"></i><i style="left:46px;top:38px;width:4px;height:1px;background:#9a9a9a"></i><i style="left:11px;top:2px;width:29px;height:35px;background:linear-gradient(180deg,#8d8982,#b5b0a8 45%,#8a857d 70%,#4d4842);filter:brightness(.91)"></i></div><div class="n" style="left:324.90000000000003px;top:218px;color:#1a1a1a">184</div>
<div class="th" style="left:419.4px;top:169px;height:40px"><i style="left:50px;top:4px;width:5px;height:1px;background:#9a9a9a"></i><i style="left:35px;top:38px;width:7px;height:1px;background:#9a9a9a"></i><i style="left:46px;top:38px;width:4px;height:1px;background:#9a9a9a"></i><i style="left:31px;top:2px;width:25px;height:35px;background:linear-gradient(90deg,#6f6962,#cfcac3 35%,#b9b3aa 70%,#e2dfda);filter:brightness(.91)"></i></div><div class="n" style="left:421.0px;top:218px;color:#1a1a1a">185</div>
<div class="th" style="left:515.5px;top:169px;height:40px"><i style="left:50px;top:4px;width:5px;height:1px;background:#9a9a9a"></i><i style="left:35px;top:38px;width:7px;height:1px;background:#9a9a9a"></i><i style="left:46px;top:38px;width:4px;height:1px;background:#9a9a9a"></i><i style="left:0px;top:2px;width:56px;height:34px;background:linear-gradient(90deg,#55585c,#cfd3d7 15%,#e1e3e5 45%,#c9c7c2 70%,#dfe1e4 90%,#6a6c70);filter:brightness(.91)"></i><i style="left:10px;top:19px;width:10px;height:7px;background:#2c2c2e"></i><i style="left:4px;top:30px;width:46px;height:6px;background:rgba(60,60,62,.55)"></i></div><div class="n" style="left:517.1px;top:218px;color:#1a1a1a">186</div>
<div class="th" style="left:611.6px;top:169px;height:40px"><i style="left:50px;top:4px;width:5px;height:1px;background:#9a9a9a"></i><i style="left:35px;top:38px;width:7px;height:1px;background:#9a9a9a"></i><i style="left:46px;top:38px;width:4px;height:1px;background:#9a9a9a"></i><i style="left:0px;top:14px;width:32px;height:6px;background:linear-gradient(90deg,#9d9d9d,#bdbdbd 50%,#a5a5a5);filter:brightness(.91)"></i><i style="left:32px;top:14px;width:24px;height:6px;background:#e6e8ea"></i></div><div class="n" style="left:613.2px;top:218px;color:#1a1a1a">187</div>
<div class="th" style="left:707.7px;top:169px;height:40px"><i style="left:50px;top:4px;width:5px;height:1px;background:#9a9a9a"></i><i style="left:35px;top:38px;width:7px;height:1px;background:#9a9a9a"></i><i style="left:46px;top:38px;width:4px;height:1px;background:#9a9a9a"></i><i style="left:0px;top:24.5px;width:56px;height:4.300000000000001px;background:linear-gradient(90deg,#a8a8a8,#c9c9c9 40%,#b0b0b0 70%,#d0d0d0);filter:brightness(.91)"></i></div><div class="n" style="left:709.3000000000001px;top:218px;color:#1a1a1a">188</div>
<div class="th" style="left:803.8px;top:169px;height:40px"><i style="left:50px;top:4px;width:5px;height:1px;background:#9a9a9a"></i><i style="left:35px;top:38px;width:7px;height:1px;background:#9a9a9a"></i><i style="left:46px;top:38px;width:4px;height:1px;background:#9a9a9a"></i><i style="left:0px;top:16px;width:33px;height:12px;background:linear-gradient(90deg,#77736d,#9c978f 50%,#8a857d);filter:brightness(.91)"></i><i style="left:33px;top:16px;width:23px;height:12px;background:#e0e2e4"></i><i style="left:38px;top:20px;width:8px;height:4px;background:#3a3a3c"></i></div><div class="n" style="left:805.4px;top:218px;color:#1a1a1a">189</div>
<div class="th p" style="left:899.9px;top:169px;height:40px"><i style="left:2.5px;top:2.5px;width:6.5px;height:3.5px;background:#808080"></i><i style="left:12px;top:11px;width:34px;height:22px;border:1px solid #b4b4b4;border-top:1.5px solid #9c9c9c;background:#eaeaea"></i><i style="left:22.2px;top:11px;width:1px;height:22px;background:#bdbdbd"></i><i style="left:33.08px;top:11px;width:1px;height:17.6px;background:#b8b8b8"></i><i style="left:12px;top:20.240000000000002px;width:27.200000000000003px;height:1px;background:#bdbdbd"></i><i style="left:22.2px;top:26.84px;width:23.799999999999997px;height:1px;background:#c2c2c2"></i><i style="left:16.08px;top:15.4px;width:3.4000000000000004px;height:11.0px;background:#d4d4d4"></i><i style="left:38.519999999999996px;top:12px;width:6.800000000000001px;height:12.100000000000001px;background:#c4c4c4"></i><i style="left:26.28px;top:22.0px;width:4.08px;height:8.8px;background:#d6d6d6"></i><i style="left:33.5px;top:38px;width:10px;height:1.3px;background:#8e8e8e"></i><i style="left:45.5px;top:38px;width:5px;height:1.3px;background:#8e8e8e"></i><i style="left:50px;top:4px;width:4px;height:1px;background:#aaa"></i><i style="left:22px;top:18px;width:5px;height:4px;background:rgba(226,59,59,.75)"></i></div><div class="n" style="left:901.5px;top:218px;color:#1a1a1a">190</div>
<div class="th" style="left:996.0px;top:169px;height:40px"><i style="left:50px;top:4px;width:5px;height:1px;background:#9a9a9a"></i><i style="left:35px;top:38px;width:7px;height:1px;background:#9a9a9a"></i><i style="left:46px;top:38px;width:4px;height:1px;background:#9a9a9a"></i><i style="left:0px;top:7px;width:54px;height:27px;background:linear-gradient(90deg,#c9d0d6,#8f969c 14%,#dfe5ea 24%,#aeb6bd 40%,#e2e7eb 55%,#b9bfc4 72%,#7e7a70 88%,#c9c6bf);filter:brightness(.91)"></i><i style="left:2px;top:28px;width:48px;height:6px;background:rgba(70,72,70,.55)"></i></div><div class="n" style="left:997.6px;top:218px;color:#1a1a1a">191</div>
<div class="th" style="left:1092.1px;top:169px;height:40px"><i style="left:50px;top:4px;width:5px;height:1px;background:#9a9a9a"></i><i style="left:35px;top:38px;width:7px;height:1px;background:#9a9a9a"></i><i style="left:46px;top:38px;width:4px;height:1px;background:#9a9a9a"></i><i style="left:0px;top:9px;width:34px;height:25px;background:linear-gradient(90deg,#6d675c,#b9beb9 22%,#c9cdc9 60%,#9aa09a);filter:brightness(.91)"></i><i style="left:10px;top:27px;width:24px;height:6px;background:#5f6652"></i></div><div class="n" style="left:1093.6999999999998px;top:218px;color:#1a1a1a">192</div>
<div class="th" style="left:35.0px;top:249px;height:39px"><i style="left:50px;top:4px;width:5px;height:1px;background:#9a9a9a"></i><i style="left:35px;top:38px;width:7px;height:1px;background:#9a9a9a"></i><i style="left:46px;top:38px;width:4px;height:1px;background:#9a9a9a"></i><i style="left:30px;top:10px;width:26px;height:23px;background:linear-gradient(180deg,#aab0ab,#cfd4cf 50%,#6f7d5d 75%,#8a8a80);filter:brightness(.91)"></i></div><div class="n" style="left:36.6px;top:298px;color:#1a1a1a">193</div>
<div class="th" style="left:131.1px;top:249px;height:39px"><i style="left:50px;top:4px;width:5px;height:1px;background:#9a9a9a"></i><i style="left:35px;top:38px;width:7px;height:1px;background:#9a9a9a"></i><i style="left:46px;top:38px;width:4px;height:1px;background:#9a9a9a"></i><i style="left:0px;top:14px;width:27px;height:6px;background:#d9dadb"></i><i style="left:27px;top:15px;width:29px;height:5px;background:linear-gradient(90deg,#8a8986,#a9a8a4);filter:brightness(.91)"></i></div><div class="n" style="left:132.7px;top:298px;color:#1a1a1a">194</div>
<div class="th" style="left:227.2px;top:249px;height:39px"><i style="left:50px;top:4px;width:5px;height:1px;background:#9a9a9a"></i><i style="left:35px;top:38px;width:7px;height:1px;background:#9a9a9a"></i><i style="left:46px;top:38px;width:4px;height:1px;background:#9a9a9a"></i><i style="left:0px;top:24px;width:56px;height:5px;background:linear-gradient(90deg,#cfcfcf,#8f928c 30%,#bdbdb8 60%,#8d9088);filter:brightness(.91)"></i></div><div class="n" style="left:228.79999999999998px;top:298px;color:#1a1a1a">195</div>
<div class="th" style="left:323.3px;top:249px;height:39px"><i style="left:50px;top:4px;width:5px;height:1px;background:#9a9a9a"></i><i style="left:35px;top:38px;width:7px;height:1px;background:#9a9a9a"></i><i style="left:46px;top:38px;width:4px;height:1px;background:#9a9a9a"></i><i style="left:0px;top:13px;width:25px;height:16px;background:linear-gradient(90deg,#e4e4e4,#b9bcc0 50%,#dedede);filter:brightness(.91)"></i><i style="left:25px;top:14px;width:31px;height:15px;background:linear-gradient(180deg,#d8d4cc,#b8b2a7 55%,#7f8470);filter:brightness(.91)"></i></div><div class="n" style="left:324.90000000000003px;top:298px;color:#1a1a1a">196</div>
<div class="th p" style="left:419.4px;top:249px;height:39px"><i style="left:2.5px;top:2.5px;width:6.5px;height:3.5px;background:#808080"></i><i style="left:8px;top:10px;width:38px;height:23px;border:1px solid #b4b4b4;border-top:1.5px solid #9c9c9c;background:#eaeaea"></i><i style="left:19.4px;top:10px;width:1px;height:23px;background:#bdbdbd"></i><i style="left:31.56px;top:10px;width:1px;height:18.400000000000002px;background:#b8b8b8"></i><i style="left:8px;top:19.66px;width:30.400000000000002px;height:1px;background:#bdbdbd"></i><i style="left:19.4px;top:26.56px;width:26.599999999999998px;height:1px;background:#c2c2c2"></i><i style="left:12.559999999999999px;top:14.600000000000001px;width:3.8000000000000003px;height:11.5px;background:#d4d4d4"></i><i style="left:37.64px;top:11px;width:7.6000000000000005px;height:12.65px;background:#c4c4c4"></i><i style="left:23.96px;top:21.5px;width:4.56px;height:9.200000000000001px;background:#d6d6d6"></i><i style="left:33.5px;top:38px;width:10px;height:1.3px;background:#8e8e8e"></i><i style="left:45.5px;top:38px;width:5px;height:1.3px;background:#8e8e8e"></i><i style="left:50px;top:4px;width:4px;height:1px;background:#aaa"></i><i style="left:13px;top:12px;width:3px;height:6px;background:rgba(226,59,59,.75)"></i></div><div class="n" style="left:421.0px;top:298px;color:#1a1a1a">197</div>
<div class="th" style="left:515.5px;top:249px;height:39px"><i style="left:50px;top:4px;width:5px;height:1px;background:#9a9a9a"></i><i style="left:35px;top:38px;width:7px;height:1px;background:#9a9a9a"></i><i style="left:46px;top:38px;width:4px;height:1px;background:#9a9a9a"></i><i style="left:0px;top:0px;width:43px;height:35px;background:linear-gradient(180deg,#4f4a45,#8f8a84 25%,#aaa59e 55%,#52623b 62%,#52623b 72%,#b7b0a7 80%,#a09a92);filter:brightness(.91)"></i></div><div class="n" style="left:517.1px;top:298px;color:#1a1a1a">198</div>
<div class="th" style="left:611.6px;top:249px;height:39px"><i style="left:50px;top:4px;width:5px;height:1px;background:#9a9a9a"></i><i style="left:35px;top:38px;width:7px;height:1px;background:#9a9a9a"></i><i style="left:46px;top:38px;width:4px;height:1px;background:#9a9a9a"></i><i style="left:0px;top:0px;width:27px;height:35px;background:linear-gradient(90deg,#8f877e,#a9a198 40%,#c9c2b8 75%,#9a9288);filter:brightness(.91)"></i></div><div class="n" style="left:613.2px;top:298px;color:#1a1a1a">199</div>
<div class="th" style="left:707.7px;top:249px;height:39px"><i style="left:50px;top:4px;width:5px;height:1px;background:#9a9a9a"></i><i style="left:35px;top:38px;width:7px;height:1px;background:#9a9a9a"></i><i style="left:46px;top:38px;width:4px;height:1px;background:#9a9a9a"></i><i style="left:19px;top:0px;width:37px;height:35px;background:linear-gradient(180deg,#7f776d,#9c9389 45%,#c3bbb0 80%,#b0a89d);filter:brightness(.91)"></i></div><div class="n" style="left:709.3000000000001px;top:298px;color:#1a1a1a">200</div>
<div class="th" style="left:803.8px;top:249px;height:39px"><i style="left:50px;top:4px;width:5px;height:1px;background:#9a9a9a"></i><i style="left:35px;top:38px;width:7px;height:1px;background:#9a9a9a"></i><i style="left:46px;top:38px;width:4px;height:1px;background:#9a9a9a"></i><i style="left:0px;top:8px;width:20px;height:10px;background:#6b6259"></i><i style="left:20px;top:8px;width:36px;height:10px;background:linear-gradient(90deg,#d6cdc1,#b9ae9f 60%,#cfc6ba);filter:brightness(.91)"></i></div><div class="n" style="left:805.4px;top:298px;color:#1a1a1a">201</div>
<div class="th" style="left:899.9px;top:249px;height:39px"><i style="left:50px;top:4px;width:5px;height:1px;background:#9a9a9a"></i><i style="left:35px;top:38px;width:7px;height:1px;background:#9a9a9a"></i><i style="left:46px;top:38px;width:4px;height:1px;background:#9a9a9a"></i><i style="left:0px;top:26px;width:56px;height:4px;background:linear-gradient(90deg,#a89a8b,#c9bcab 50%,#9d8f80);filter:brightness(.91)"></i></div><div class="n" style="left:901.5px;top:298px;color:#1a1a1a">202</div>
<div class="th" style="left:996.0px;top:249px;height:39px"><i style="left:50px;top:4px;width:5px;height:1px;background:#9a9a9a"></i><i style="left:35px;top:38px;width:7px;height:1px;background:#9a9a9a"></i><i style="left:46px;top:38px;width:4px;height:1px;background:#9a9a9a"></i><i style="left:0px;top:9px;width:56px;height:21px;background:linear-gradient(90deg,#8f877b,#b8b0a4 22%,#d3cdc2 38%,#7d7468 55%,#a59c8f 78%,#8a8175);filter:brightness(.91)"></i></div><div class="n" style="left:997.6px;top:298px;color:#1a1a1a">203</div>
<div class="th p" style="left:1092.1px;top:249px;height:39px"><i style="left:2.5px;top:2.5px;width:6.5px;height:3.5px;background:#808080"></i><i style="left:9px;top:9px;width:38px;height:24px;border:1px solid #b4b4b4;border-top:1.5px solid #9c9c9c;background:#eaeaea"></i><i style="left:20.4px;top:9px;width:1px;height:24px;background:#bdbdbd"></i><i style="left:32.56px;top:9px;width:1px;height:19.200000000000003px;background:#b8b8b8"></i><i style="left:9px;top:19.08px;width:30.400000000000002px;height:1px;background:#bdbdbd"></i><i style="left:20.4px;top:26.28px;width:26.599999999999998px;height:1px;background:#c2c2c2"></i><i style="left:13.559999999999999px;top:13.8px;width:3.8000000000000003px;height:12.0px;background:#d4d4d4"></i><i style="left:38.64px;top:10px;width:7.6000000000000005px;height:13.200000000000001px;background:#c4c4c4"></i><i style="left:24.96px;top:21.0px;width:4.56px;height:9.600000000000001px;background:#d6d6d6"></i><i style="left:33.5px;top:38px;width:10px;height:1.3px;background:#8e8e8e"></i><i style="left:45.5px;top:38px;width:5px;height:1.3px;background:#8e8e8e"></i><i style="left:50px;top:4px;width:4px;height:1px;background:#aaa"></i><i style="left:7px;top:13px;width:2px;height:5px;background:rgba(226,59,59,.75)"></i></div><div class="n" style="left:1093.6999999999998px;top:298px;color:#1a1a1a">204</div>
<div class="th" style="left:35.0px;top:328px;height:40px"><i style="left:50px;top:4px;width:5px;height:1px;background:#9a9a9a"></i><i style="left:35px;top:38px;width:7px;height:1px;background:#9a9a9a"></i><i style="left:46px;top:38px;width:4px;height:1px;background:#9a9a9a"></i><i style="left:34px;top:7px;width:22px;height:31px;background:linear-gradient(180deg,#dbd7d0,#cfcac1 50%,#9a8b78 75%,#c9c2b7);filter:brightness(.91)"></i></div><div class="n" style="left:36.6px;top:377px;color:#1a1a1a">205</div>
<div class="th" style="left:131.1px;top:328px;height:40px"><i style="left:50px;top:4px;width:5px;height:1px;background:#9a9a9a"></i><i style="left:35px;top:38px;width:7px;height:1px;background:#9a9a9a"></i><i style="left:46px;top:38px;width:4px;height:1px;background:#9a9a9a"></i><i style="left:20px;top:7px;width:16px;height:30px;background:linear-gradient(180deg,#c9c4bc,#a9a298 50%,#6f6358 80%,#8d8479);filter:brightness(.91)"></i></div><div class="n" style="left:132.7px;top:377px;color:#1a1a1a">206</div>
<div class="th" style="left:227.2px;top:328px;height:40px"><i style="left:50px;top:4px;width:5px;height:1px;background:#9a9a9a"></i><i style="left:35px;top:38px;width:7px;height:1px;background:#9a9a9a"></i><i style="left:46px;top:38px;width:4px;height:1px;background:#9a9a9a"></i><i style="left:0px;top:7px;width:9px;height:30px;background:#55575a"></i><i style="left:9px;top:7px;width:16px;height:30px;background:linear-gradient(180deg,#d3d5d7,#b9bbbd 55%,#7b766f);filter:brightness(.91)"></i></div><div class="n" style="left:228.79999999999998px;top:377px;color:#1a1a1a">207</div>
<div class="th" style="left:323.3px;top:328px;height:40px"><i style="left:50px;top:4px;width:5px;height:1px;background:#9a9a9a"></i><i style="left:35px;top:38px;width:7px;height:1px;background:#9a9a9a"></i><i style="left:46px;top:38px;width:4px;height:1px;background:#9a9a9a"></i><i style="left:0px;top:7px;width:56px;height:11px;background:linear-gradient(90deg,#cfcfcd,#e4e4e2 40%,#d9d6cf 75%,#c9b99f);filter:brightness(.91)"></i></div><div class="n" style="left:324.90000000000003px;top:377px;color:#1a1a1a">208</div>
<div class="th" style="left:419.4px;top:328px;height:40px"><i style="left:50px;top:4px;width:5px;height:1px;background:#9a9a9a"></i><i style="left:35px;top:38px;width:7px;height:1px;background:#9a9a9a"></i><i style="left:46px;top:38px;width:4px;height:1px;background:#9a9a9a"></i><i style="left:0px;top:28px;width:56px;height:9px;background:linear-gradient(90deg,#9d917f,#6f6557 25%,#b9ad9b 50%,#74695b 70%,#c9c1b3);filter:brightness(.91)"></i></div><div class="n" style="left:421.0px;top:377px;color:#1a1a1a">209</div>
<div class="th" style="left:515.5px;top:328px;height:40px"><i style="left:50px;top:4px;width:5px;height:1px;background:#9a9a9a"></i><i style="left:35px;top:38px;width:7px;height:1px;background:#9a9a9a"></i><i style="left:46px;top:38px;width:4px;height:1px;background:#9a9a9a"></i><i style="left:0px;top:7px;width:10px;height:29px;background:#6a6a68"></i><i style="left:10px;top:7px;width:46px;height:29px;background:linear-gradient(180deg,#d6d6d4,#c6c5c1 45%,#6f6358 68%,#b9ae9f 88%);filter:brightness(.91)"></i></div><div class="n" style="left:517.1px;top:377px;color:#1a1a1a">210</div>
<div class="th p" style="left:611.6px;top:328px;height:40px"><i style="left:2.5px;top:2.5px;width:6.5px;height:3.5px;background:#808080"></i><i style="left:12px;top:11px;width:34px;height:22px;border:1px solid #b4b4b4;border-top:1.5px solid #9c9c9c;background:#eaeaea"></i><i style="left:22.2px;top:11px;width:1px;height:22px;background:#bdbdbd"></i><i style="left:33.08px;top:11px;width:1px;height:17.6px;background:#b8b8b8"></i><i style="left:12px;top:20.240000000000002px;width:27.200000000000003px;height:1px;background:#bdbdbd"></i><i style="left:22.2px;top:26.84px;width:23.799999999999997px;height:1px;background:#c2c2c2"></i><i style="left:16.08px;top:15.4px;width:3.4000000000000004px;height:11.0px;background:#d4d4d4"></i><i style="left:38.519999999999996px;top:12px;width:6.800000000000001px;height:12.100000000000001px;background:#c4c4c4"></i><i style="left:26.28px;top:22.0px;width:4.08px;height:8.8px;background:#d6d6d6"></i><i style="left:33.5px;top:38px;width:10px;height:1.3px;background:#8e8e8e"></i><i style="left:45.5px;top:38px;width:5px;height:1.3px;background:#8e8e8e"></i><i style="left:50px;top:4px;width:4px;height:1px;background:#aaa"></i><i style="left:31px;top:13px;width:3px;height:9px;background:rgba(226,59,59,.75)"></i></div><div class="n" style="left:613.2px;top:377px;color:#1a1a1a">211</div>
<div class="th" style="left:707.7px;top:328px;height:40px"><i style="left:50px;top:4px;width:5px;height:1px;background:#9a9a9a"></i><i style="left:35px;top:38px;width:7px;height:1px;background:#9a9a9a"></i><i style="left:46px;top:38px;width:4px;height:1px;background:#9a9a9a"></i><i style="left:34px;top:9px;width:22px;height:28px;background:linear-gradient(180deg,#8a7c6b,#7a6d5e 60%,#6a5e51);filter:brightness(.91)"></i></div><div class="n" style="left:709.3000000000001px;top:377px;color:#1a1a1a">212</div>
<div class="th" style="left:803.8px;top:328px;height:40px"><i style="left:50px;top:4px;width:5px;height:1px;background:#9a9a9a"></i><i style="left:35px;top:38px;width:7px;height:1px;background:#9a9a9a"></i><i style="left:46px;top:38px;width:4px;height:1px;background:#9a9a9a"></i><i style="left:1px;top:9px;width:37px;height:26px;background:linear-gradient(180deg,#c9c5be,#bdb8b0 50%,#6b5d50 75%,#a59a8c);filter:brightness(.91)"></i></div><div class="n" style="left:805.4px;top:377px;color:#1a1a1a">213</div>
<div class="th" style="left:899.9px;top:328px;height:40px"><i style="left:50px;top:4px;width:5px;height:1px;background:#9a9a9a"></i><i style="left:35px;top:38px;width:7px;height:1px;background:#9a9a9a"></i><i style="left:46px;top:38px;width:4px;height:1px;background:#9a9a9a"></i><i style="left:0px;top:9px;width:40px;height:7px;background:#d7d7d5"></i><i style="left:40px;top:9px;width:16px;height:7px;background:#a89a88"></i></div><div class="n" style="left:901.5px;top:377px;color:#1a1a1a">214</div>
<div class="th" style="left:996.0px;top:328px;height:40px"><i style="left:50px;top:4px;width:5px;height:1px;background:#9a9a9a"></i><i style="left:35px;top:38px;width:7px;height:1px;background:#9a9a9a"></i><i style="left:46px;top:38px;width:4px;height:1px;background:#9a9a9a"></i><i style="left:0px;top:28px;width:56px;height:8px;background:linear-gradient(90deg,#a5998b,#8a7f72 30%,#b5a999 60%,#93887b);filter:brightness(.91)"></i></div><div class="n" style="left:997.6px;top:377px;color:#1a1a1a">215</div>
<div class="th" style="left:1092.1px;top:328px;height:40px"><i style="left:50px;top:4px;width:5px;height:1px;background:#9a9a9a"></i><i style="left:35px;top:38px;width:7px;height:1px;background:#9a9a9a"></i><i style="left:46px;top:38px;width:4px;height:1px;background:#9a9a9a"></i><i style="left:0px;top:9px;width:36px;height:26px;background:linear-gradient(180deg,#cfcbc4,#bdb8b0 50%,#6f6255 78%,#a59a8c);filter:brightness(.91)"></i><i style="left:36px;top:9px;width:20px;height:26px;background:linear-gradient(180deg,#8a7966,#6f5f4f);filter:brightness(.91)"></i></div><div class="n" style="left:1093.6999999999998px;top:377px;color:#1a1a1a">216</div>
<div class="th p" style="left:35.0px;top:408px;height:40px"><i style="left:2.5px;top:2.5px;width:6.5px;height:3.5px;background:#808080"></i><i style="left:10px;top:11px;width:36px;height:22px;border:1px solid #b4b4b4;border-top:1.5px solid #9c9c9c;background:#eaeaea"></i><i style="left:20.799999999999997px;top:11px;width:1px;height:22px;background:#bdbdbd"></i><i style="left:32.32px;top:11px;width:1px;height:17.6px;background:#b8b8b8"></i><i style="left:10px;top:20.240000000000002px;width:28.8px;height:1px;background:#bdbdbd"></i><i style="left:20.799999999999997px;top:26.84px;width:25.2px;height:1px;background:#c2c2c2"></i><i style="left:14.32px;top:15.4px;width:3.6px;height:11.0px;background:#d4d4d4"></i><i style="left:38.08px;top:12px;width:7.2px;height:12.100000000000001px;background:#c4c4c4"></i><i style="left:25.119999999999997px;top:22.0px;width:4.32px;height:8.8px;background:#d6d6d6"></i><i style="left:33.5px;top:38px;width:10px;height:1.3px;background:#8e8e8e"></i><i style="left:45.5px;top:38px;width:5px;height:1.3px;background:#8e8e8e"></i><i style="left:50px;top:4px;width:4px;height:1px;background:#aaa"></i><svg style="position:absolute;left:35px;top:6px;width:9px;height:5px" viewBox="0 0 10 10" preserveAspectRatio="none"><path d="M0 10 L5 0 L10 10 Z" fill="#e23b3b"/></svg></div><div class="n" style="left:36.6px;top:457px;color:#1a1a1a">217</div>
<div class="th" style="left:131.1px;top:408px;height:40px"><i style="left:50px;top:4px;width:5px;height:1px;background:#9a9a9a"></i><i style="left:35px;top:38px;width:7px;height:1px;background:#9a9a9a"></i><i style="left:46px;top:38px;width:4px;height:1px;background:#9a9a9a"></i><i style="left:0px;top:8px;width:13px;height:28px;background:linear-gradient(180deg,#d3d1cd,#bdbab5 60%,#8a8278);filter:brightness(.91)"></i></div><div class="n" style="left:132.7px;top:457px;color:#1a1a1a">218</div>
<div class="th" style="left:227.2px;top:408px;height:40px"><i style="left:50px;top:4px;width:5px;height:1px;background:#9a9a9a"></i><i style="left:35px;top:38px;width:7px;height:1px;background:#9a9a9a"></i><i style="left:46px;top:38px;width:4px;height:1px;background:#9a9a9a"></i><i style="left:10px;top:8px;width:25px;height:27px;background:linear-gradient(90deg,#c3beb6,#a39c92 35%,#5f5952 60%,#8f887e);filter:brightness(.91)"></i></div><div class="n" style="left:228.79999999999998px;top:457px;color:#1a1a1a">219</div>
<div class="th" style="left:323.3px;top:408px;height:40px"><i style="left:50px;top:4px;width:5px;height:1px;background:#9a9a9a"></i><i style="left:35px;top:38px;width:7px;height:1px;background:#9a9a9a"></i><i style="left:46px;top:38px;width:4px;height:1px;background:#9a9a9a"></i><i style="left:31px;top:8px;width:25px;height:28px;background:linear-gradient(180deg,#bdb6ad,#d0cac2 50%,#b3aba0);filter:brightness(.91)"></i></div><div class="n" style="left:324.90000000000003px;top:457px;color:#1a1a1a">220</div>
<div class="th" style="left:419.4px;top:408px;height:40px"><i style="left:50px;top:4px;width:5px;height:1px;background:#9a9a9a"></i><i style="left:35px;top:38px;width:7px;height:1px;background:#9a9a9a"></i><i style="left:46px;top:38px;width:4px;height:1px;background:#9a9a9a"></i><i style="left:0px;top:8px;width:56px;height:12px;background:linear-gradient(90deg,#c9c7c3,#e0dedb 35%,#d2cec7 70%,#b7a78f);filter:brightness(.91)"></i></div><div class="n" style="left:421.0px;top:457px;color:#1a1a1a">221</div>
<div class="th" style="left:515.5px;top:408px;height:40px"><i style="left:50px;top:4px;width:5px;height:1px;background:#9a9a9a"></i><i style="left:35px;top:38px;width:7px;height:1px;background:#9a9a9a"></i><i style="left:46px;top:38px;width:4px;height:1px;background:#9a9a9a"></i><i style="left:0px;top:29px;width:38px;height:7px;background:linear-gradient(90deg,#7f7263,#a09282 50%,#6f6355);filter:brightness(.91)"></i><i style="left:38px;top:29px;width:18px;height:7px;background:#d9d5cf"></i></div><div class="n" style="left:517.1px;top:457px;color:#1a1a1a">222</div>
<div class="th" style="left:611.6px;top:408px;height:40px"><i style="left:50px;top:4px;width:5px;height:1px;background:#9a9a9a"></i><i style="left:35px;top:38px;width:7px;height:1px;background:#9a9a9a"></i><i style="left:46px;top:38px;width:4px;height:1px;background:#9a9a9a"></i><i style="left:0px;top:8px;width:56px;height:28px;background:linear-gradient(90deg,#b9b5ae,#a8a39b 30%,#514c46 40%,#514c46 55%,#a89f92 65%,#c3bdb3);filter:brightness(.91)"></i><i style="left:0px;top:8px;width:56px;height:6px;background:rgba(225,223,220,.7)"></i></div><div class="n" style="left:613.2px;top:457px;color:#1a1a1a">223</div>
<div class="th" style="left:707.7px;top:408px;height:40px"><i style="left:19px;top:15px;width:3px;height:1px;background:#ccc"></i><i style="left:20px;top:18px;width:9px;height:1px;background:#aaa"></i><i style="left:19px;top:35px;width:4px;height:1px;background:#ccc"></i><i style="left:20px;top:37px;width:6px;height:1px;background:#aaa"></i></div><div class="n" style="left:709.3000000000001px;top:457px;color:#1a1a1a">224</div>
<div class="th" style="left:803.8px;top:408px;height:40px"><i style="left:50px;top:4px;width:5px;height:1px;background:#9a9a9a"></i><i style="left:35px;top:38px;width:7px;height:1px;background:#9a9a9a"></i><i style="left:46px;top:38px;width:4px;height:1px;background:#9a9a9a"></i><i style="left:3px;top:11px;width:30px;height:8px;background:linear-gradient(90deg,#5a5248,#7a6f60 50%,#4a443c);filter:brightness(.91)"></i><i style="left:34px;top:11px;width:19px;height:11px;background:#eeeeee"></i><i style="left:3px;top:24px;width:26px;height:9px;background:linear-gradient(90deg,#e6e6e6,#777 30%,#e6e6e6 45%,#555 60%,#e6e6e6 80%);filter:brightness(.91)"></i><i style="left:30px;top:24px;width:23px;height:9px;background:linear-gradient(90deg,#5f666e,#8a9097);filter:brightness(.91)"></i></div><div class="n" style="left:805.4px;top:457px;color:#1a1a1a">225</div>
<div class="th" style="left:899.9px;top:408px;height:40px"><i style="left:19px;top:15px;width:3px;height:1px;background:#ccc"></i><i style="left:20px;top:18px;width:9px;height:1px;background:#aaa"></i><i style="left:19px;top:35px;width:4px;height:1px;background:#ccc"></i><i style="left:20px;top:37px;width:6px;height:1px;background:#aaa"></i></div><div class="n" style="left:901.5px;top:457px;color:#1a1a1a">226</div>
<div class="th" style="left:996.0px;top:408px;height:40px"><i style="left:50px;top:4px;width:5px;height:1px;background:#9a9a9a"></i><i style="left:35px;top:38px;width:7px;height:1px;background:#9a9a9a"></i><i style="left:46px;top:38px;width:4px;height:1px;background:#9a9a9a"></i><i style="left:0px;top:15px;width:32px;height:13px;background:linear-gradient(90deg,#77736d,#9c978f 50%,#8a857d);filter:brightness(.91)"></i><i style="left:32px;top:15px;width:24px;height:13px;background:#e0e2e4"></i><i style="left:38px;top:21px;width:7px;height:4px;background:#3a3a3c"></i></div><div class="n" style="left:997.6px;top:457px;color:#1a1a1a">227</div>
<div class="th" style="left:1092.1px;top:408px;height:40px"><i style="left:50px;top:4px;width:5px;height:1px;background:#9a9a9a"></i><i style="left:35px;top:38px;width:7px;height:1px;background:#9a9a9a"></i><i style="left:46px;top:38px;width:4px;height:1px;background:#9a9a9a"></i><i style="left:0px;top:14px;width:26px;height:14px;background:linear-gradient(90deg,#e2e2e2,#b9bcc0 50%,#dcdcdc);filter:brightness(.91)"></i><i style="left:26px;top:15px;width:30px;height:13px;background:linear-gradient(180deg,#d8d4cc,#b8b2a7 55%,#7f8470);filter:brightness(.91)"></i></div><div class="n" style="left:1093.6999999999998px;top:457px;color:#1a1a1a">228</div>
<div class="th" style="left:35.0px;top:488px;height:40px"><i style="left:50px;top:4px;width:5px;height:1px;background:#9a9a9a"></i><i style="left:35px;top:38px;width:7px;height:1px;background:#9a9a9a"></i><i style="left:46px;top:38px;width:4px;height:1px;background:#9a9a9a"></i><i style="left:0px;top:9px;width:56px;height:22px;background:linear-gradient(90deg,#6f675d,#a8a096 25%,#cfc9bf 45%,#8f877b 65%,#a59c90);filter:brightness(.91)"></i></div><div class="n" style="left:36.6px;top:537px;color:#1a1a1a">229</div>
<div class="th" style="left:131.1px;top:488px;height:40px"><i style="left:50px;top:4px;width:5px;height:1px;background:#9a9a9a"></i><i style="left:35px;top:38px;width:7px;height:1px;background:#9a9a9a"></i><i style="left:46px;top:38px;width:4px;height:1px;background:#9a9a9a"></i><i style="left:0px;top:7px;width:10px;height:29px;background:#6a6a68"></i><i style="left:10px;top:7px;width:46px;height:29px;background:linear-gradient(180deg,#d6d6d4,#c6c5c1 45%,#6f6358 68%,#b9ae9f 88%);filter:brightness(.91)"></i></div><div class="n" style="left:132.7px;top:537px;color:#1a1a1a">230</div>
<div class="th" style="left:227.2px;top:488px;height:40px"><i style="left:50px;top:4px;width:5px;height:1px;background:#9a9a9a"></i><i style="left:35px;top:38px;width:7px;height:1px;background:#9a9a9a"></i><i style="left:46px;top:38px;width:4px;height:1px;background:#9a9a9a"></i><i style="left:0px;top:8px;width:33px;height:26px;background:linear-gradient(180deg,#cbc7c0,#b9b4ac 50%,#6b5d50 78%,#a09588);filter:brightness(.91)"></i><i style="left:33px;top:8px;width:23px;height:26px;background:linear-gradient(180deg,#7a6855,#5f4f40);filter:brightness(.91)"></i></div><div class="n" style="left:228.79999999999998px;top:537px;color:#1a1a1a">231</div>
<div class="th" style="left:323.3px;top:488px;height:40px"><i style="left:50px;top:4px;width:5px;height:1px;background:#9a9a9a"></i><i style="left:35px;top:38px;width:7px;height:1px;background:#9a9a9a"></i><i style="left:46px;top:38px;width:4px;height:1px;background:#9a9a9a"></i><i style="left:0px;top:8px;width:56px;height:27px;background:linear-gradient(90deg,#d9d7d3,#cfcbc4 35%,#47433f 42%,#47433f 56%,#bdb3a5 64%,#d3ccc0);filter:brightness(.91)"></i><i style="left:0px;top:8px;width:56px;height:6px;background:rgba(232,231,229,.8)"></i></div><div class="n" style="left:324.90000000000003px;top:537px;color:#1a1a1a">232</div>
<div class="th" style="left:419.4px;top:488px;height:40px"><i style="left:19px;top:15px;width:3px;height:1px;background:#ccc"></i><i style="left:20px;top:18px;width:9px;height:1px;background:#aaa"></i><i style="left:19px;top:35px;width:4px;height:1px;background:#ccc"></i><i style="left:20px;top:37px;width:6px;height:1px;background:#aaa"></i></div><div class="n" style="left:421.0px;top:537px;color:#1a1a1a">233</div>
<div class="th p" style="left:515.5px;top:488px;height:40px"><i style="left:2.5px;top:2.5px;width:6.5px;height:3.5px;background:#808080"></i><i style="left:12px;top:13px;width:34px;height:19px;border:1px solid #b4b4b4;border-top:1.5px solid #9c9c9c;background:#eaeaea"></i><i style="left:22.2px;top:13px;width:1px;height:19px;background:#bdbdbd"></i><i style="left:33.08px;top:13px;width:1px;height:15.200000000000001px;background:#b8b8b8"></i><i style="left:12px;top:20.98px;width:27.200000000000003px;height:1px;background:#bdbdbd"></i><i style="left:22.2px;top:26.68px;width:23.799999999999997px;height:1px;background:#c2c2c2"></i><i style="left:16.08px;top:16.8px;width:3.4000000000000004px;height:9.5px;background:#d4d4d4"></i><i style="left:38.519999999999996px;top:14px;width:6.800000000000001px;height:10.450000000000001px;background:#c4c4c4"></i><i style="left:26.28px;top:22.5px;width:4.08px;height:7.6000000000000005px;background:#d6d6d6"></i><i style="left:33.5px;top:38px;width:10px;height:1.3px;background:#8e8e8e"></i><i style="left:45.5px;top:38px;width:5px;height:1.3px;background:#8e8e8e"></i><i style="left:52px;top:4.5px;width:4px;height:3px;background:#2b6cb8"></i></div><div class="n" style="left:517.1px;top:537px;color:#1a1a1a">234</div>
<div class="th p" style="left:611.6px;top:488px;height:40px"><i style="left:2.5px;top:2.5px;width:6.5px;height:3.5px;background:#808080"></i><i style="left:12px;top:13px;width:34px;height:19px;border:1px solid #b4b4b4;border-top:1.5px solid #9c9c9c;background:#eaeaea"></i><i style="left:22.2px;top:13px;width:1px;height:19px;background:#bdbdbd"></i><i style="left:33.08px;top:13px;width:1px;height:15.200000000000001px;background:#b8b8b8"></i><i style="left:12px;top:20.98px;width:27.200000000000003px;height:1px;background:#bdbdbd"></i><i style="left:22.2px;top:26.68px;width:23.799999999999997px;height:1px;background:#c2c2c2"></i><i style="left:16.08px;top:16.8px;width:3.4000000000000004px;height:9.5px;background:#d4d4d4"></i><i style="left:38.519999999999996px;top:14px;width:6.800000000000001px;height:10.450000000000001px;background:#c4c4c4"></i><i style="left:26.28px;top:22.5px;width:4.08px;height:7.6000000000000005px;background:#d6d6d6"></i><i style="left:33.5px;top:38px;width:10px;height:1.3px;background:#8e8e8e"></i><i style="left:45.5px;top:38px;width:5px;height:1.3px;background:#8e8e8e"></i><i style="left:52px;top:4.5px;width:4px;height:3px;background:#2b6cb8"></i></div><div class="n" style="left:613.2px;top:537px;color:#1a1a1a">235</div>
<div class="th p" style="left:707.7px;top:488px;height:40px"><i style="left:2.5px;top:2.5px;width:6.5px;height:3.5px;background:#808080"></i><i style="left:12px;top:13px;width:34px;height:19px;border:1px solid #b4b4b4;border-top:1.5px solid #9c9c9c;background:#eaeaea"></i><i style="left:22.2px;top:13px;width:1px;height:19px;background:#bdbdbd"></i><i style="left:33.08px;top:13px;width:1px;height:15.200000000000001px;background:#b8b8b8"></i><i style="left:12px;top:20.98px;width:27.200000000000003px;height:1px;background:#bdbdbd"></i><i style="left:22.2px;top:26.68px;width:23.799999999999997px;height:1px;background:#c2c2c2"></i><i style="left:16.08px;top:16.8px;width:3.4000000000000004px;height:9.5px;background:#d4d4d4"></i><i style="left:38.519999999999996px;top:14px;width:6.800000000000001px;height:10.450000000000001px;background:#c4c4c4"></i><i style="left:26.28px;top:22.5px;width:4.08px;height:7.6000000000000005px;background:#d6d6d6"></i><i style="left:33.5px;top:38px;width:10px;height:1.3px;background:#8e8e8e"></i><i style="left:45.5px;top:38px;width:5px;height:1.3px;background:#8e8e8e"></i><i style="left:52px;top:4.5px;width:4px;height:3px;background:#2b6cb8"></i></div><div class="n" style="left:709.3000000000001px;top:537px;color:#1a1a1a">236</div>
<div class="th p" style="left:803.8px;top:488px;height:40px"><i style="left:2.5px;top:2.5px;width:6.5px;height:3.5px;background:#808080"></i><i style="left:12px;top:13px;width:34px;height:19px;border:1px solid #b4b4b4;border-top:1.5px solid #9c9c9c;background:#eaeaea"></i><i style="left:22.2px;top:13px;width:1px;height:19px;background:#bdbdbd"></i><i style="left:33.08px;top:13px;width:1px;height:15.200000000000001px;background:#b8b8b8"></i><i style="left:12px;top:20.98px;width:27.200000000000003px;height:1px;background:#bdbdbd"></i><i style="left:22.2px;top:26.68px;width:23.799999999999997px;height:1px;background:#c2c2c2"></i><i style="left:16.08px;top:16.8px;width:3.4000000000000004px;height:9.5px;background:#d4d4d4"></i><i style="left:38.519999999999996px;top:14px;width:6.800000000000001px;height:10.450000000000001px;background:#c4c4c4"></i><i style="left:26.28px;top:22.5px;width:4.08px;height:7.6000000000000005px;background:#d6d6d6"></i><i style="left:33.5px;top:38px;width:10px;height:1.3px;background:#8e8e8e"></i><i style="left:45.5px;top:38px;width:5px;height:1.3px;background:#8e8e8e"></i><i style="left:52px;top:4.5px;width:4px;height:3px;background:#2b6cb8"></i></div><div class="n" style="left:805.4px;top:537px;color:#1a1a1a">237</div>
<div class="th p" style="left:899.9px;top:488px;height:40px"><i style="left:2.5px;top:2.5px;width:6.5px;height:3.5px;background:#808080"></i><i style="left:12px;top:13px;width:34px;height:19px;border:1px solid #b4b4b4;border-top:1.5px solid #9c9c9c;background:#eaeaea"></i><i style="left:22.2px;top:13px;width:1px;height:19px;background:#bdbdbd"></i><i style="left:33.08px;top:13px;width:1px;height:15.200000000000001px;background:#b8b8b8"></i><i style="left:12px;top:20.98px;width:27.200000000000003px;height:1px;background:#bdbdbd"></i><i style="left:22.2px;top:26.68px;width:23.799999999999997px;height:1px;background:#c2c2c2"></i><i style="left:16.08px;top:16.8px;width:3.4000000000000004px;height:9.5px;background:#d4d4d4"></i><i style="left:38.519999999999996px;top:14px;width:6.800000000000001px;height:10.450000000000001px;background:#c4c4c4"></i><i style="left:26.28px;top:22.5px;width:4.08px;height:7.6000000000000005px;background:#d6d6d6"></i><i style="left:33.5px;top:38px;width:10px;height:1.3px;background:#8e8e8e"></i><i style="left:45.5px;top:38px;width:5px;height:1.3px;background:#8e8e8e"></i><i style="left:52px;top:4.5px;width:4px;height:3px;background:#2b6cb8"></i></div><div class="n" style="left:901.5px;top:537px;color:#1a1a1a">238</div>
<div class="th p" style="left:996.0px;top:488px;height:40px"><i style="left:2.5px;top:2.5px;width:6.5px;height:3.5px;background:#808080"></i><i style="left:12px;top:13px;width:34px;height:19px;border:1px solid #b4b4b4;border-top:1.5px solid #9c9c9c;background:#eaeaea"></i><i style="left:22.2px;top:13px;width:1px;height:19px;background:#bdbdbd"></i><i style="left:33.08px;top:13px;width:1px;height:15.200000000000001px;background:#b8b8b8"></i><i style="left:12px;top:20.98px;width:27.200000000000003px;height:1px;background:#bdbdbd"></i><i style="left:22.2px;top:26.68px;width:23.799999999999997px;height:1px;background:#c2c2c2"></i><i style="left:16.08px;top:16.8px;width:3.4000000000000004px;height:9.5px;background:#d4d4d4"></i><i style="left:38.519999999999996px;top:14px;width:6.800000000000001px;height:10.450000000000001px;background:#c4c4c4"></i><i style="left:26.28px;top:22.5px;width:4.08px;height:7.6000000000000005px;background:#d6d6d6"></i><i style="left:33.5px;top:38px;width:10px;height:1.3px;background:#8e8e8e"></i><i style="left:45.5px;top:38px;width:5px;height:1.3px;background:#8e8e8e"></i><i style="left:52px;top:4.5px;width:4px;height:3px;background:#2b6cb8"></i></div><div class="n" style="left:997.6px;top:537px;color:#1a1a1a">239</div>
<div class="th" style="left:1092.1px;top:488px;height:40px"><i style="left:19px;top:15px;width:3px;height:1px;background:#ccc"></i><i style="left:20px;top:18px;width:9px;height:1px;background:#aaa"></i><i style="left:19px;top:35px;width:4px;height:1px;background:#ccc"></i><i style="left:20px;top:37px;width:6px;height:1px;background:#aaa"></i></div><div class="n" style="left:1093.6999999999998px;top:537px;color:#1a1a1a">240</div>
<div class="th" style="left:35.0px;top:568px;height:39px"><i style="left:3px;top:5.5px;width:17px;height:28.0px;background:linear-gradient(90deg,#8c8278,#a89a8a 35%,#d2c0ae 48%,#a89a8a 60%,#857a70);filter:brightness(.91)"></i><i style="left:21px;top:5.5px;width:26px;height:12.5px;background:linear-gradient(180deg,#8f8a84,#b8b4ae 40%,#e6e4e0 65%,#a8a39c);filter:brightness(.91)"></i><i style="left:48px;top:5.5px;width:7px;height:12.5px;background:#6a5240"></i><i style="left:21px;top:19px;width:9px;height:14.5px;background:#9a9590"></i><i style="left:30px;top:19px;width:7px;height:14.5px;background:#dcdad6"></i><i style="left:38px;top:19px;width:8px;height:14.5px;background:#5f5044"></i><i style="left:47px;top:19px;width:8px;height:14.5px;background:linear-gradient(180deg,#a08060,#7a5e46);filter:brightness(.91)"></i></div><div class="n" style="left:36.6px;top:617px;color:#1a1a1a">241</div>
<div class="th" style="left:131.1px;top:568px;height:39px"><i style="left:5px;top:4px;width:8px;height:8.5px;background:#d8d8d8"></i><i style="left:14.5px;top:4px;width:8.5px;height:8.5px;background:#eeeeee"></i><i style="left:24px;top:4px;width:8px;height:8.5px;background:#555555"></i><i style="left:33.5px;top:4px;width:17.5px;height:8.5px;background:linear-gradient(90deg,#8a5a38,#7a4e30 60%,#b08860 85%,#6a4a34);filter:brightness(.91)"></i><i style="left:5px;top:14px;width:8px;height:8.5px;background:#a87848"></i><i style="left:14.5px;top:14px;width:8.5px;height:8.5px;background:#b88850"></i><i style="left:24px;top:14px;width:8px;height:8.5px;background:#3a4040"></i><i style="left:33.5px;top:14px;width:8.5px;height:8.5px;background:#4a4038"></i><i style="left:42.5px;top:14px;width:8.5px;height:8.5px;background:#c8c4c0"></i><i style="left:5px;top:25.5px;width:6.5px;height:7.0px;background:#808080"></i><i style="left:13px;top:25.5px;width:6.5px;height:7.0px;background:#d8d8d8"></i><i style="left:21px;top:25.5px;width:7px;height:7.0px;background:#e0dcd8"></i><i style="left:29px;top:25.5px;width:6.5px;height:7.0px;background:#a06838"></i><i style="left:37px;top:25.5px;width:6.5px;height:7.0px;background:#d8d0c8"></i><i style="left:45px;top:25.5px;width:6.5px;height:7.0px;background:#c8b8a0"></i></div><div class="n" style="left:132.7px;top:617px;color:#1a1a1a">242</div>
<div class="th" style="left:227.2px;top:568px;height:39px"><i style="left:20px;top:15px;width:3px;height:1px;background:#ccc"></i><i style="left:21px;top:18px;width:9px;height:1px;background:#aaa"></i><i style="left:20px;top:35px;width:4px;height:1px;background:#ccc"></i><i style="left:21px;top:37px;width:6px;height:1px;background:#aaa"></i></div><div class="n" style="left:228.79999999999998px;top:617px;color:#1a1a1a">243</div>
<div class="th p" style="left:323.3px;top:568px;height:39px"><i style="left:2.5px;top:2.5px;width:6.5px;height:3.5px;background:#808080"></i><i style="left:12px;top:13px;width:34px;height:16px;border:1px solid #b4b4b4;border-top:1.5px solid #9c9c9c;background:#eaeaea"></i><i style="left:22.2px;top:13px;width:1px;height:16px;background:#bdbdbd"></i><i style="left:33.08px;top:13px;width:1px;height:12.8px;background:#b8b8b8"></i><i style="left:12px;top:19.72px;width:27.200000000000003px;height:1px;background:#bdbdbd"></i><i style="left:22.2px;top:24.52px;width:23.799999999999997px;height:1px;background:#c2c2c2"></i><i style="left:16.08px;top:16.2px;width:3.4000000000000004px;height:8.0px;background:#d4d4d4"></i><i style="left:38.519999999999996px;top:14px;width:6.800000000000001px;height:8.8px;background:#c4c4c4"></i><i style="left:26.28px;top:21.0px;width:4.08px;height:6.4px;background:#d6d6d6"></i><i style="left:33.5px;top:38px;width:10px;height:1.3px;background:#8e8e8e"></i><i style="left:45.5px;top:38px;width:5px;height:1.3px;background:#8e8e8e"></i><i style="left:50px;top:4px;width:4px;height:1px;background:#aaa"></i><svg style="position:absolute;left:25px;top:14px;width:13px;height:6px" viewBox="0 0 10 10" preserveAspectRatio="none"><path d="M0 10 L5 0 L10 10 Z" fill="rgba(226,59,59,.8)"/></svg></div><div class="n" style="left:324.90000000000003px;top:617px;color:#1a1a1a">244</div>
<div class="th" style="left:419.4px;top:568px;height:39px"><i style="left:50px;top:4px;width:5px;height:1px;background:#9a9a9a"></i><i style="left:35px;top:38px;width:7px;height:1px;background:#9a9a9a"></i><i style="left:46px;top:38px;width:4px;height:1px;background:#9a9a9a"></i><i style="left:0px;top:0px;width:29px;height:33px;background:linear-gradient(90deg,#8f8576,#c6bdb0 40%,#d6d0c6 60%,#a89e90);filter:brightness(.91)"></i></div><div class="n" style="left:421.0px;top:617px;color:#1a1a1a">245</div>
<div class="th" style="left:515.5px;top:568px;height:39px"><i style="left:50px;top:4px;width:5px;height:1px;background:#9a9a9a"></i><i style="left:35px;top:38px;width:7px;height:1px;background:#9a9a9a"></i><i style="left:46px;top:38px;width:4px;height:1px;background:#9a9a9a"></i><i style="left:24px;top:0px;width:29px;height:33px;background:linear-gradient(90deg,#a89c8c,#cfc8bc 25%,#e4e0d8 50%,#cfc8bc 75%,#a89c8c);filter:brightness(.91)"></i><i style="left:24px;top:0px;width:29px;height:6px;background:rgba(150,140,128,.6)"></i><i style="left:24px;top:27px;width:29px;height:6px;background:rgba(150,140,128,.5)"></i></div><div class="n" style="left:517.1px;top:617px;color:#1a1a1a">246</div>
<div class="th" style="left:611.6px;top:568px;height:39px"><i style="left:50px;top:4px;width:5px;height:1px;background:#9a9a9a"></i><i style="left:35px;top:38px;width:7px;height:1px;background:#9a9a9a"></i><i style="left:46px;top:38px;width:4px;height:1px;background:#9a9a9a"></i><i style="left:6px;top:0px;width:34px;height:33px;background:linear-gradient(180deg,#9a9184,#cbc4b8 45%,#b5ac9f 80%,#8f8679);filter:brightness(.91)"></i><i style="left:40px;top:0px;width:16px;height:33px;background:#8a8880"></i></div><div class="n" style="left:613.2px;top:617px;color:#1a1a1a">247</div>
<div class="th" style="left:707.7px;top:568px;height:39px"><i style="left:50px;top:4px;width:5px;height:1px;background:#9a9a9a"></i><i style="left:35px;top:38px;width:7px;height:1px;background:#9a9a9a"></i><i style="left:46px;top:38px;width:4px;height:1px;background:#9a9a9a"></i><i style="left:0px;top:10px;width:56px;height:8px;background:linear-gradient(180deg,#8a8070,#d3ccc0 45%,#cfc8bc);filter:brightness(.91)"></i></div><div class="n" style="left:709.3000000000001px;top:617px;color:#1a1a1a">248</div>
<div class="th" style="left:803.8px;top:568px;height:39px"><i style="left:50px;top:4px;width:5px;height:1px;background:#9a9a9a"></i><i style="left:35px;top:38px;width:7px;height:1px;background:#9a9a9a"></i><i style="left:46px;top:38px;width:4px;height:1px;background:#9a9a9a"></i><i style="left:0px;top:21px;width:56px;height:7px;background:linear-gradient(90deg,#b3a393,#d9cfc2 30%,#a89888 60%,#c9bcab);filter:brightness(.91)"></i></div><div class="n" style="left:805.4px;top:617px;color:#1a1a1a">249</div>
<div class="th" style="left:899.9px;top:568px;height:39px"><i style="left:50px;top:4px;width:5px;height:1px;background:#9a9a9a"></i><i style="left:35px;top:38px;width:7px;height:1px;background:#9a9a9a"></i><i style="left:46px;top:38px;width:4px;height:1px;background:#9a9a9a"></i><i style="left:0px;top:10px;width:56px;height:19px;background:linear-gradient(90deg,#a89784,#c3b5a3 25%,#e6e2da 45%,#e0dcd4 65%,#b8a896 80%,#a08f7c);filter:brightness(.91)"></i></div><div class="n" style="left:901.5px;top:617px;color:#1a1a1a">250</div>
<div class="th p" style="left:996.0px;top:568px;height:39px"><i style="left:2.5px;top:2.5px;width:6.5px;height:3.5px;background:#808080"></i><i style="left:12px;top:11px;width:34px;height:19px;border:1px solid #b4b4b4;border-top:1.5px solid #9c9c9c;background:#eaeaea"></i><i style="left:22.2px;top:11px;width:1px;height:19px;background:#bdbdbd"></i><i style="left:33.08px;top:11px;width:1px;height:15.200000000000001px;background:#b8b8b8"></i><i style="left:12px;top:18.98px;width:27.200000000000003px;height:1px;background:#bdbdbd"></i><i style="left:22.2px;top:24.68px;width:23.799999999999997px;height:1px;background:#c2c2c2"></i><i style="left:16.08px;top:14.8px;width:3.4000000000000004px;height:9.5px;background:#d4d4d4"></i><i style="left:38.519999999999996px;top:12px;width:6.800000000000001px;height:10.450000000000001px;background:#c4c4c4"></i><i style="left:26.28px;top:20.5px;width:4.08px;height:7.6000000000000005px;background:#d6d6d6"></i><i style="left:33.5px;top:38px;width:10px;height:1.3px;background:#8e8e8e"></i><i style="left:45.5px;top:38px;width:5px;height:1.3px;background:#8e8e8e"></i><i style="left:50px;top:4px;width:4px;height:1px;background:#aaa"></i><svg style="position:absolute;left:26px;top:31px;width:7px;height:5px" viewBox="0 0 10 10" preserveAspectRatio="none"><path d="M0 0 L5 10 L10 0 Z" fill="#e23b3b"/></svg></div><div class="n" style="left:997.6px;top:617px;color:#1a1a1a">251</div>
<div class="th" style="left:1092.1px;top:568px;height:39px"><i style="left:50px;top:4px;width:5px;height:1px;background:#9a9a9a"></i><i style="left:35px;top:38px;width:7px;height:1px;background:#9a9a9a"></i><i style="left:46px;top:38px;width:4px;height:1px;background:#9a9a9a"></i><i style="left:19px;top:0px;width:37px;height:33px;background:linear-gradient(180deg,#bdb6ab,#a8a094 50%,#8a8074 75%,#4d453c);filter:brightness(.91)"></i><i style="left:30px;top:5px;width:12px;height:17px;background:rgba(225,222,216,.7)"></i><i style="left:48px;top:4px;width:8px;height:16px;background:#4f6038"></i></div><div class="n" style="left:1093.6999999999998px;top:617px;color:#1a1a1a">252</div>
<div class="th" style="left:35.0px;top:647px;height:40px"><i style="left:50px;top:4px;width:5px;height:1px;background:#9a9a9a"></i><i style="left:35px;top:38px;width:7px;height:1px;background:#9a9a9a"></i><i style="left:46px;top:38px;width:4px;height:1px;background:#9a9a9a"></i><i style="left:0px;top:4px;width:33px;height:30px;background:linear-gradient(180deg,#b9b1a5,#a39b8f 50%,#c3bcb0 75%,#8f877b);filter:brightness(.91)"></i></div><div class="n" style="left:36.6px;top:696px;color:#1a1a1a">253</div>
<div class="th" style="left:131.1px;top:647px;height:40px"><i style="left:50px;top:4px;width:5px;height:1px;background:#9a9a9a"></i><i style="left:35px;top:38px;width:7px;height:1px;background:#9a9a9a"></i><i style="left:46px;top:38px;width:4px;height:1px;background:#9a9a9a"></i><i style="left:0px;top:0px;width:12px;height:34px;background:#d3cbbf"></i><i style="left:12px;top:0px;width:30px;height:34px;background:linear-gradient(180deg,#bdb3a5,#a89e90 50%,#c6beb2 78%,#9a9184);filter:brightness(.91)"></i></div><div class="n" style="left:132.7px;top:696px;color:#1a1a1a">254</div>
<div class="th" style="left:227.2px;top:647px;height:40px"><i style="left:50px;top:4px;width:5px;height:1px;background:#9a9a9a"></i><i style="left:35px;top:38px;width:7px;height:1px;background:#9a9a9a"></i><i style="left:46px;top:38px;width:4px;height:1px;background:#9a9a9a"></i><i style="left:0px;top:8px;width:56px;height:1px;background:#f0f0f0"></i><i style="left:0px;top:9px;width:56px;height:8px;background:linear-gradient(90deg,#b9b7b1,#d0cec8 50%,#9aa093);filter:brightness(.91)"></i></div><div class="n" style="left:228.79999999999998px;top:696px;color:#1a1a1a">255</div>
<div class="th" style="left:323.3px;top:647px;height:40px"><i style="left:50px;top:4px;width:5px;height:1px;background:#9a9a9a"></i><i style="left:35px;top:38px;width:7px;height:1px;background:#9a9a9a"></i><i style="left:46px;top:38px;width:4px;height:1px;background:#9a9a9a"></i><i style="left:0px;top:22px;width:56px;height:10px;background:linear-gradient(90deg,#9a9286,#b9b1a5 30%,#d0c9be 55%,#a39b8f);filter:brightness(.91)"></i></div><div class="n" style="left:324.90000000000003px;top:696px;color:#1a1a1a">256</div>
<div class="th" style="left:419.4px;top:647px;height:40px"><i style="left:50px;top:4px;width:5px;height:1px;background:#9a9a9a"></i><i style="left:35px;top:38px;width:7px;height:1px;background:#9a9a9a"></i><i style="left:46px;top:38px;width:4px;height:1px;background:#9a9a9a"></i><i style="left:0px;top:8px;width:56px;height:1px;background:#e8e8e8"></i><i style="left:0px;top:9px;width:50px;height:23px;background:linear-gradient(90deg,#b5ab9c,#9a9286 35%,#cbc4b8 60%,#a8a094);filter:brightness(.91)"></i><i style="left:50px;top:9px;width:6px;height:23px;background:#5d6a48"></i></div><div class="n" style="left:421.0px;top:696px;color:#1a1a1a">257</div>
<div class="th p" style="left:515.5px;top:647px;height:40px"><i style="left:2.5px;top:2.5px;width:6.5px;height:3.5px;background:#808080"></i><i style="left:12px;top:11px;width:30px;height:21px;border:1px solid #b4b4b4;border-top:1.5px solid #9c9c9c;background:#eaeaea"></i><i style="left:21.0px;top:11px;width:1px;height:21px;background:#bdbdbd"></i><i style="left:30.6px;top:11px;width:1px;height:16.8px;background:#b8b8b8"></i><i style="left:12px;top:19.82px;width:24.0px;height:1px;background:#bdbdbd"></i><i style="left:21.0px;top:26.119999999999997px;width:21.0px;height:1px;background:#c2c2c2"></i><i style="left:15.6px;top:15.2px;width:3.0px;height:10.5px;background:#d4d4d4"></i><i style="left:35.400000000000006px;top:12px;width:6.0px;height:11.55px;background:#c4c4c4"></i><i style="left:24.6px;top:21.5px;width:3.5999999999999996px;height:8.4px;background:#d6d6d6"></i><i style="left:33.5px;top:38px;width:10px;height:1.3px;background:#8e8e8e"></i><i style="left:45.5px;top:38px;width:5px;height:1.3px;background:#8e8e8e"></i><i style="left:50px;top:4px;width:4px;height:1px;background:#aaa"></i><i style="left:18px;top:19px;width:5px;height:8px;background:rgba(226,59,59,.75)"></i></div><div class="n" style="left:517.1px;top:696px;color:#1a1a1a">258</div>
<div class="th" style="left:611.6px;top:647px;height:40px"><i style="left:50px;top:4px;width:5px;height:1px;background:#9a9a9a"></i><i style="left:35px;top:38px;width:7px;height:1px;background:#9a9a9a"></i><i style="left:46px;top:38px;width:4px;height:1px;background:#9a9a9a"></i><i style="left:0px;top:7px;width:8px;height:29px;background:#4f4a44"></i><i style="left:8px;top:7px;width:21px;height:29px;background:linear-gradient(90deg,#8a8478,#5f584f 30%,#b5ac9e 60%,#cbc3b6);filter:brightness(.91)"></i></div><div class="n" style="left:613.2px;top:696px;color:#1a1a1a">259</div>
<div class="th" style="left:707.7px;top:647px;height:40px"><i style="left:50px;top:4px;width:5px;height:1px;background:#9a9a9a"></i><i style="left:35px;top:38px;width:7px;height:1px;background:#9a9a9a"></i><i style="left:46px;top:38px;width:4px;height:1px;background:#9a9a9a"></i><i style="left:16px;top:7px;width:26px;height:29px;background:linear-gradient(180deg,#d6d2ca,#b5a995 40%,#9a8c78 70%,#c3b8a6);filter:brightness(.91)"></i></div><div class="n" style="left:709.3000000000001px;top:696px;color:#1a1a1a">260</div>
<div class="th" style="left:803.8px;top:647px;height:40px"><i style="left:50px;top:4px;width:5px;height:1px;background:#9a9a9a"></i><i style="left:35px;top:38px;width:7px;height:1px;background:#9a9a9a"></i><i style="left:46px;top:38px;width:4px;height:1px;background:#9a9a9a"></i><i style="left:29px;top:7px;width:27px;height:29px;background:linear-gradient(180deg,#dbd6ce,#c3bbae 45%,#a59884 75%,#c9c0b2);filter:brightness(.91)"></i></div><div class="n" style="left:805.4px;top:696px;color:#1a1a1a">261</div>
<div class="th" style="left:899.9px;top:647px;height:40px"><i style="left:50px;top:4px;width:5px;height:1px;background:#9a9a9a"></i><i style="left:35px;top:38px;width:7px;height:1px;background:#9a9a9a"></i><i style="left:46px;top:38px;width:4px;height:1px;background:#9a9a9a"></i><i style="left:0px;top:7px;width:14px;height:11px;background:#e2e0dc"></i><i style="left:14px;top:7px;width:42px;height:11px;background:linear-gradient(90deg,#a89c8c,#d0c9be 45%,#bdb3a5);filter:brightness(.91)"></i></div><div class="n" style="left:901.5px;top:696px;color:#1a1a1a">262</div>
<div class="th" style="left:996.0px;top:647px;height:40px"><i style="left:50px;top:4px;width:5px;height:1px;background:#9a9a9a"></i><i style="left:35px;top:38px;width:7px;height:1px;background:#9a9a9a"></i><i style="left:46px;top:38px;width:4px;height:1px;background:#9a9a9a"></i><i style="left:0px;top:24px;width:56px;height:13px;background:linear-gradient(90deg,#9a8e7e,#b9ad9b 30%,#8a7e6e 55%,#c3b8a6 80%,#a5998a);filter:brightness(.91)"></i></div><div class="n" style="left:997.6px;top:696px;color:#1a1a1a">263</div>
<div class="th" style="left:1092.1px;top:647px;height:40px"><i style="left:50px;top:4px;width:5px;height:1px;background:#9a9a9a"></i><i style="left:35px;top:38px;width:7px;height:1px;background:#9a9a9a"></i><i style="left:46px;top:38px;width:4px;height:1px;background:#9a9a9a"></i><i style="left:0px;top:7px;width:56px;height:30px;background:linear-gradient(90deg,#cfcbc3,#6a5c4e 18%,#8a7c6a 34%,#d3cec5 50%,#b5a995 70%,#c3b8a6);filter:brightness(.91)"></i></div><div class="n" style="left:1093.6999999999998px;top:696px;color:#1a1a1a">264</div>
<div class="th p" style="left:35.0px;top:727px;height:40px"><i style="left:2.5px;top:2.5px;width:6.5px;height:3.5px;background:#808080"></i><i style="left:12px;top:13px;width:32px;height:18px;border:1px solid #b4b4b4;border-top:1.5px solid #9c9c9c;background:#eaeaea"></i><i style="left:21.6px;top:13px;width:1px;height:18px;background:#bdbdbd"></i><i style="left:31.84px;top:13px;width:1px;height:14.4px;background:#b8b8b8"></i><i style="left:12px;top:20.56px;width:25.6px;height:1px;background:#bdbdbd"></i><i style="left:21.6px;top:25.96px;width:22.4px;height:1px;background:#c2c2c2"></i><i style="left:15.84px;top:16.6px;width:3.2px;height:9.0px;background:#d4d4d4"></i><i style="left:36.96px;top:14px;width:6.4px;height:9.9px;background:#c4c4c4"></i><i style="left:25.439999999999998px;top:22.0px;width:3.84px;height:7.2px;background:#d6d6d6"></i><i style="left:33.5px;top:38px;width:10px;height:1.3px;background:#8e8e8e"></i><i style="left:45.5px;top:38px;width:5px;height:1.3px;background:#8e8e8e"></i><i style="left:50px;top:4px;width:4px;height:1px;background:#aaa"></i><i style="left:34px;top:20px;width:3px;height:7px;background:rgba(226,59,59,.75)"></i></div><div class="n" style="left:36.6px;top:776px;color:#1a1a1a">265</div>
<div class="th" style="left:131.1px;top:727px;height:40px"><i style="left:50px;top:4px;width:5px;height:1px;background:#9a9a9a"></i><i style="left:35px;top:38px;width:7px;height:1px;background:#9a9a9a"></i><i style="left:46px;top:38px;width:4px;height:1px;background:#9a9a9a"></i><i style="left:0px;top:7px;width:17px;height:29px;background:linear-gradient(180deg,#d6d2cc,#cbc7c0 55%,#8a6f55 80%,#a89c8c);filter:brightness(.91)"></i></div><div class="n" style="left:132.7px;top:776px;color:#1a1a1a">266</div>
<div class="th" style="left:227.2px;top:727px;height:40px"><i style="left:50px;top:4px;width:5px;height:1px;background:#9a9a9a"></i><i style="left:35px;top:38px;width:7px;height:1px;background:#9a9a9a"></i><i style="left:46px;top:38px;width:4px;height:1px;background:#9a9a9a"></i><i style="left:10px;top:7px;width:31px;height:29px;background:linear-gradient(180deg,#a39888,#5f564b 30%,#9a8f80 55%,#d3cdc3 78%,#8a8074);filter:brightness(.91)"></i></div><div class="n" style="left:228.79999999999998px;top:776px;color:#1a1a1a">267</div>
<div class="th" style="left:323.3px;top:727px;height:40px"><i style="left:50px;top:4px;width:5px;height:1px;background:#9a9a9a"></i><i style="left:35px;top:38px;width:7px;height:1px;background:#9a9a9a"></i><i style="left:46px;top:38px;width:4px;height:1px;background:#9a9a9a"></i><i style="left:27px;top:7px;width:13px;height:29px;background:linear-gradient(180deg,#b5ac9e,#a0978a 60%,#8a8175);filter:brightness(.91)"></i><i style="left:40px;top:7px;width:16px;height:29px;background:#8d8c88"></i></div><div class="n" style="left:324.90000000000003px;top:776px;color:#1a1a1a">268</div>
<div class="th" style="left:419.4px;top:727px;height:40px"><i style="left:50px;top:4px;width:5px;height:1px;background:#9a9a9a"></i><i style="left:35px;top:38px;width:7px;height:1px;background:#9a9a9a"></i><i style="left:46px;top:38px;width:4px;height:1px;background:#9a9a9a"></i><i style="left:0px;top:7px;width:56px;height:10px;background:linear-gradient(90deg,#8f8373,#d3cfc8 30%,#cbc6be 50%,#a09484 70%,#8a7e6e);filter:brightness(.91)"></i></div><div class="n" style="left:421.0px;top:776px;color:#1a1a1a">269</div>
<div class="th" style="left:515.5px;top:727px;height:40px"><i style="left:50px;top:4px;width:5px;height:1px;background:#9a9a9a"></i><i style="left:35px;top:38px;width:7px;height:1px;background:#9a9a9a"></i><i style="left:46px;top:38px;width:4px;height:1px;background:#9a9a9a"></i><i style="left:0px;top:23px;width:56px;height:12px;background:linear-gradient(90deg,#a39888,#c9c2b6 25%,#ecebe8 45%,#d6d1c8 60%,#a89e90 80%,#8f8678);filter:brightness(.91)"></i></div><div class="n" style="left:517.1px;top:776px;color:#1a1a1a">270</div>
<div class="th" style="left:611.6px;top:727px;height:40px"><i style="left:50px;top:4px;width:5px;height:1px;background:#9a9a9a"></i><i style="left:35px;top:38px;width:7px;height:1px;background:#9a9a9a"></i><i style="left:46px;top:38px;width:4px;height:1px;background:#9a9a9a"></i><i style="left:0px;top:7px;width:40px;height:29px;background:linear-gradient(180deg,#a89c8c,#6f6558 25%,#a39888 50%,#dbd7cf 75%,#8a8074);filter:brightness(.91)"></i><i style="left:40px;top:7px;width:16px;height:29px;background:#8c8b86"></i></div><div class="n" style="left:613.2px;top:776px;color:#1a1a1a">271</div>
<div class="th p" style="left:707.7px;top:727px;height:40px"><i style="left:2.5px;top:2.5px;width:6.5px;height:3.5px;background:#808080"></i><i style="left:12px;top:13px;width:34px;height:17px;border:1px solid #b4b4b4;border-top:1.5px solid #9c9c9c;background:#eaeaea"></i><i style="left:22.2px;top:13px;width:1px;height:17px;background:#bdbdbd"></i><i style="left:33.08px;top:13px;width:1px;height:13.600000000000001px;background:#b8b8b8"></i><i style="left:12px;top:20.14px;width:27.200000000000003px;height:1px;background:#bdbdbd"></i><i style="left:22.2px;top:25.240000000000002px;width:23.799999999999997px;height:1px;background:#c2c2c2"></i><i style="left:16.08px;top:16.4px;width:3.4000000000000004px;height:8.5px;background:#d4d4d4"></i><i style="left:38.519999999999996px;top:14px;width:6.800000000000001px;height:9.350000000000001px;background:#c4c4c4"></i><i style="left:26.28px;top:21.5px;width:4.08px;height:6.800000000000001px;background:#d6d6d6"></i><i style="left:33.5px;top:38px;width:10px;height:1.3px;background:#8e8e8e"></i><i style="left:45.5px;top:38px;width:5px;height:1.3px;background:#8e8e8e"></i><i style="left:50px;top:4px;width:4px;height:1px;background:#aaa"></i><svg style="position:absolute;left:11px;top:31px;width:7px;height:5px" viewBox="0 0 10 10" preserveAspectRatio="none"><path d="M0 0 L5 10 L10 0 Z" fill="#e23b3b"/></svg></div><div class="n" style="left:709.3000000000001px;top:776px;color:#1a1a1a">272</div>
<div class="th" style="left:803.8px;top:727px;height:40px"><i style="left:50px;top:4px;width:5px;height:1px;background:#9a9a9a"></i><i style="left:35px;top:38px;width:7px;height:1px;background:#9a9a9a"></i><i style="left:46px;top:38px;width:4px;height:1px;background:#9a9a9a"></i><i style="left:0px;top:0px;width:15px;height:37px;background:linear-gradient(180deg,#b5ab9c,#a89e90 50%,#cbc3b6 80%,#9a9082);filter:brightness(.91)"></i></div><div class="n" style="left:805.4px;top:776px;color:#1a1a1a">273</div>
<div class="th" style="left:899.9px;top:727px;height:40px"><i style="left:50px;top:4px;width:5px;height:1px;background:#9a9a9a"></i><i style="left:35px;top:38px;width:7px;height:1px;background:#9a9a9a"></i><i style="left:46px;top:38px;width:4px;height:1px;background:#9a9a9a"></i><i style="left:12px;top:0px;width:32px;height:12px;background:#e2e2e0"></i><i style="left:12px;top:12px;width:32px;height:21px;background:linear-gradient(90deg,#b9ae9c,#a89c88 28%,#4a423a 42%,#4a423a 68%,#a89c88 75%,#b9ae9c);filter:brightness(.91)"></i><i style="left:12px;top:33px;width:32px;height:5px;background:#3f454c"></i></div><div class="n" style="left:901.5px;top:776px;color:#1a1a1a">274</div>
<div class="th" style="left:996.0px;top:727px;height:40px"><i style="left:50px;top:4px;width:5px;height:1px;background:#9a9a9a"></i><i style="left:35px;top:38px;width:7px;height:1px;background:#9a9a9a"></i><i style="left:46px;top:38px;width:4px;height:1px;background:#9a9a9a"></i><i style="left:40px;top:0px;width:16px;height:38px;background:linear-gradient(180deg,#8a7c6a,#a09280 50%,#7a6c5c);filter:brightness(.91)"></i></div><div class="n" style="left:997.6px;top:776px;color:#1a1a1a">275</div>
<div class="th" style="left:1092.1px;top:727px;height:40px"><i style="left:50px;top:4px;width:5px;height:1px;background:#9a9a9a"></i><i style="left:35px;top:38px;width:7px;height:1px;background:#9a9a9a"></i><i style="left:46px;top:38px;width:4px;height:1px;background:#9a9a9a"></i><i style="left:0px;top:0px;width:56px;height:18px;background:linear-gradient(90deg,#a89c8c,#d9d6d0 25%,#f0efec 50%,#d3cfc8 75%,#9a8e7e);filter:brightness(.91)"></i></div><div class="n" style="left:1093.6999999999998px;top:776px;color:#1a1a1a">276</div>
<div class="th" style="left:35.0px;top:807px;height:39px"><i style="left:50px;top:4px;width:5px;height:1px;background:#9a9a9a"></i><i style="left:35px;top:38px;width:7px;height:1px;background:#9a9a9a"></i><i style="left:46px;top:38px;width:4px;height:1px;background:#9a9a9a"></i><i style="left:0px;top:29px;width:56px;height:8px;background:linear-gradient(90deg,#a39480,#cfc3b0 35%,#8a7c6a 55%,#b5a894 80%,#9a8c78);filter:brightness(.91)"></i></div><div class="n" style="left:36.6px;top:856px;color:#1a1a1a">277</div>
<div class="th" style="left:131.1px;top:807px;height:39px"><i style="left:0px;top:0px;width:56px;height:38px;background:linear-gradient(90deg,#8a7c68,#b5aa98 20%,#a89c88 35%,#4a423a 44%,#4a423a 60%,#a89c88 68%,#7f715e 85%,#6a5c4a);filter:brightness(.91)"></i><i style="left:12px;top:0px;width:34px;height:10px;background:#e0e0de"></i><i style="left:0px;top:33px;width:56px;height:5px;background:#4a4e52"></i></div><div class="n" style="left:132.7px;top:856px;color:#1a1a1a">278</div>
<div class="th p" style="left:227.2px;top:807px;height:39px"><i style="left:2.5px;top:2.5px;width:6.5px;height:3.5px;background:#808080"></i><i style="left:12px;top:13px;width:34px;height:17px;border:1px solid #b4b4b4;border-top:1.5px solid #9c9c9c;background:#eaeaea"></i><i style="left:22.2px;top:13px;width:1px;height:17px;background:#bdbdbd"></i><i style="left:33.08px;top:13px;width:1px;height:13.600000000000001px;background:#b8b8b8"></i><i style="left:12px;top:20.14px;width:27.200000000000003px;height:1px;background:#bdbdbd"></i><i style="left:22.2px;top:25.240000000000002px;width:23.799999999999997px;height:1px;background:#c2c2c2"></i><i style="left:16.08px;top:16.4px;width:3.4000000000000004px;height:8.5px;background:#d4d4d4"></i><i style="left:38.519999999999996px;top:14px;width:6.800000000000001px;height:9.350000000000001px;background:#c4c4c4"></i><i style="left:26.28px;top:21.5px;width:4.08px;height:6.800000000000001px;background:#d6d6d6"></i><i style="left:33.5px;top:38px;width:10px;height:1.3px;background:#8e8e8e"></i><i style="left:45.5px;top:38px;width:5px;height:1.3px;background:#8e8e8e"></i><i style="left:50px;top:4px;width:4px;height:1px;background:#aaa"></i><i style="left:17px;top:18px;width:4px;height:10px;background:rgba(226,59,59,.75)"></i></div><div class="n" style="left:228.79999999999998px;top:856px;color:#1a1a1a">279</div>
<div class="th" style="left:323.3px;top:807px;height:39px"><i style="left:50px;top:4px;width:5px;height:1px;background:#9a9a9a"></i><i style="left:35px;top:38px;width:7px;height:1px;background:#9a9a9a"></i><i style="left:46px;top:38px;width:4px;height:1px;background:#9a9a9a"></i><i style="left:2px;top:7px;width:28px;height:24px;background:linear-gradient(90deg,#e0deda,#d0ccc4 30%,#a08a70 55%,#c9c3b9 80%,#d9d6d0);filter:brightness(.91)"></i></div><div class="n" style="left:324.90000000000003px;top:856px;color:#1a1a1a">280</div>
<div class="th" style="left:419.4px;top:807px;height:39px"><i style="left:50px;top:4px;width:5px;height:1px;background:#9a9a9a"></i><i style="left:35px;top:38px;width:7px;height:1px;background:#9a9a9a"></i><i style="left:46px;top:38px;width:4px;height:1px;background:#9a9a9a"></i><i style="left:28px;top:7px;width:28px;height:25px;background:linear-gradient(90deg,#a89e8e,#8f8576 25%,#c3bbae 55%,#d6d0c6 85%);filter:brightness(.91)"></i></div><div class="n" style="left:421.0px;top:856px;color:#1a1a1a">281</div>
<div class="th" style="left:515.5px;top:807px;height:39px"><i style="left:50px;top:4px;width:5px;height:1px;background:#9a9a9a"></i><i style="left:35px;top:38px;width:7px;height:1px;background:#9a9a9a"></i><i style="left:46px;top:38px;width:4px;height:1px;background:#9a9a9a"></i><i style="left:0px;top:8px;width:56px;height:8px;background:linear-gradient(90deg,#e0deda,#c9c3b9 35%,#a89c8a 55%,#d3cdc3 80%);filter:brightness(.91)"></i></div><div class="n" style="left:517.1px;top:856px;color:#1a1a1a">282</div>
<div class="th" style="left:611.6px;top:807px;height:39px"><i style="left:50px;top:4px;width:5px;height:1px;background:#9a9a9a"></i><i style="left:35px;top:38px;width:7px;height:1px;background:#9a9a9a"></i><i style="left:46px;top:38px;width:4px;height:1px;background:#9a9a9a"></i><i style="left:0px;top:28px;width:56px;height:6px;background:linear-gradient(90deg,#cfc9bf,#8f8474 30%,#b5aa98 60%,#d6d0c6 85%);filter:brightness(.91)"></i></div><div class="n" style="left:613.2px;top:856px;color:#1a1a1a">283</div>
<div class="th" style="left:707.7px;top:807px;height:39px"><i style="left:50px;top:4px;width:5px;height:1px;background:#9a9a9a"></i><i style="left:35px;top:38px;width:7px;height:1px;background:#9a9a9a"></i><i style="left:46px;top:38px;width:4px;height:1px;background:#9a9a9a"></i><i style="left:0px;top:7px;width:38px;height:25px;background:linear-gradient(90deg,#e0deda,#d0ccc4 30%,#a08a70 55%,#c9c3b9 85%);filter:brightness(.91)"></i><i style="left:38px;top:7px;width:18px;height:25px;background:linear-gradient(90deg,#8f8576,#c3bbae 50%,#d6d0c6);filter:brightness(.91)"></i></div><div class="n" style="left:709.3000000000001px;top:856px;color:#1a1a1a">284</div>
<div class="th p" style="left:803.8px;top:807px;height:39px"><i style="left:2.5px;top:2.5px;width:6.5px;height:3.5px;background:#808080"></i><i style="left:12px;top:13px;width:34px;height:17px;border:1px solid #b4b4b4;border-top:1.5px solid #9c9c9c;background:#eaeaea"></i><i style="left:22.2px;top:13px;width:1px;height:17px;background:#bdbdbd"></i><i style="left:33.08px;top:13px;width:1px;height:13.600000000000001px;background:#b8b8b8"></i><i style="left:12px;top:20.14px;width:27.200000000000003px;height:1px;background:#bdbdbd"></i><i style="left:22.2px;top:25.240000000000002px;width:23.799999999999997px;height:1px;background:#c2c2c2"></i><i style="left:16.08px;top:16.4px;width:3.4000000000000004px;height:8.5px;background:#d4d4d4"></i><i style="left:38.519999999999996px;top:14px;width:6.800000000000001px;height:9.350000000000001px;background:#c4c4c4"></i><i style="left:26.28px;top:21.5px;width:4.08px;height:6.800000000000001px;background:#d6d6d6"></i><i style="left:33.5px;top:38px;width:10px;height:1.3px;background:#8e8e8e"></i><i style="left:45.5px;top:38px;width:5px;height:1.3px;background:#8e8e8e"></i><i style="left:50px;top:4px;width:4px;height:1px;background:#aaa"></i><i style="left:11px;top:13px;width:9px;height:14px;border:1.5px solid rgba(226,59,59,.8)"></i></div><div class="n" style="left:805.4px;top:856px;color:#1a1a1a">285</div>
<div class="th" style="left:899.9px;top:807px;height:39px"><i style="left:50px;top:4px;width:5px;height:1px;background:#9a9a9a"></i><i style="left:35px;top:38px;width:7px;height:1px;background:#9a9a9a"></i><i style="left:46px;top:38px;width:4px;height:1px;background:#9a9a9a"></i><i style="left:27px;top:0px;width:29px;height:34px;background:linear-gradient(180deg,#d6cebf,#cfc7b8 55%,#bdb3a2);filter:brightness(.91)"></i></div><div class="n" style="left:901.5px;top:856px;color:#1a1a1a">286</div>
<div class="th" style="left:996.0px;top:807px;height:39px"><i style="left:50px;top:4px;width:5px;height:1px;background:#9a9a9a"></i><i style="left:35px;top:38px;width:7px;height:1px;background:#9a9a9a"></i><i style="left:46px;top:38px;width:4px;height:1px;background:#9a9a9a"></i><i style="left:0px;top:0px;width:31px;height:36px;background:linear-gradient(180deg,#d6cebf,#cfc7b8 55%,#c3baa9);filter:brightness(.91)"></i></div><div class="n" style="left:997.6px;top:856px;color:#1a1a1a">287</div>
<div class="th" style="left:1092.1px;top:807px;height:39px"><i style="left:0px;top:0px;width:56px;height:37px;background:linear-gradient(180deg,#dcd5c8,#d3cbbd 55%,#c3baa9);filter:brightness(.91)"></i></div><div class="n" style="left:1093.6999999999998px;top:856px;color:#1a1a1a">288</div>
<div class="th" style="left:35.0px;top:886px;height:40px"><i style="left:19px;top:15px;width:3px;height:1px;background:#ccc"></i><i style="left:20px;top:18px;width:9px;height:1px;background:#aaa"></i><i style="left:19px;top:35px;width:4px;height:1px;background:#ccc"></i><i style="left:20px;top:37px;width:6px;height:1px;background:#aaa"></i></div><div class="n" style="left:36.6px;top:935px;color:#1a1a1a">289</div>
<div class="th" style="left:131.1px;top:886px;height:40px"><i style="left:50px;top:4px;width:5px;height:1px;background:#9a9a9a"></i><i style="left:35px;top:38px;width:7px;height:1px;background:#9a9a9a"></i><i style="left:46px;top:38px;width:4px;height:1px;background:#9a9a9a"></i><i style="left:1px;top:11px;width:54px;height:11px;background:linear-gradient(90deg,#ecebe8,#bdb9b3 30%,#e6e4e0 55%,#d0ccc6 80%,#f0efec);filter:brightness(.91)"></i><i style="left:1px;top:23px;width:10px;height:10px;background:#efefed"></i><i style="left:12px;top:23px;width:43px;height:10px;background:linear-gradient(90deg,#5f4d3d,#8a7864 40%,#4f4034 70%,#7a6a58);filter:brightness(.91)"></i></div><div class="n" style="left:132.7px;top:935px;color:#1a1a1a">290</div>
<div class="th" style="left:227.2px;top:886px;height:40px"><i style="left:19px;top:15px;width:3px;height:1px;background:#ccc"></i><i style="left:20px;top:18px;width:9px;height:1px;background:#aaa"></i><i style="left:19px;top:35px;width:4px;height:1px;background:#ccc"></i><i style="left:20px;top:37px;width:6px;height:1px;background:#aaa"></i></div><div class="n" style="left:228.79999999999998px;top:935px;color:#1a1a1a">291</div>
<div class="th" style="left:323.3px;top:886px;height:40px"><i style="left:50px;top:4px;width:5px;height:1px;background:#9a9a9a"></i><i style="left:35px;top:38px;width:7px;height:1px;background:#9a9a9a"></i><i style="left:46px;top:38px;width:4px;height:1px;background:#9a9a9a"></i><i style="left:0px;top:10px;width:56px;height:21px;background:linear-gradient(90deg,#a89784,#c3b5a3 22%,#e2ded6 40%,#dcd8d0 62%,#b8a896 78%,#a08f7c);filter:brightness(.91)"></i></div><div class="n" style="left:324.90000000000003px;top:935px;color:#1a1a1a">292</div>
<div class="th" style="left:419.4px;top:886px;height:40px"><i style="left:50px;top:4px;width:5px;height:1px;background:#9a9a9a"></i><i style="left:35px;top:38px;width:7px;height:1px;background:#9a9a9a"></i><i style="left:46px;top:38px;width:4px;height:1px;background:#9a9a9a"></i><i style="left:0px;top:8px;width:56px;height:1px;background:#e8e8e8"></i><i style="left:0px;top:9px;width:50px;height:23px;background:linear-gradient(90deg,#b5ab9c,#9a9286 35%,#cbc4b8 60%,#a8a094);filter:brightness(.91)"></i><i style="left:50px;top:9px;width:6px;height:23px;background:#5d6a48"></i></div><div class="n" style="left:421.0px;top:935px;color:#1a1a1a">293</div>
<div class="th" style="left:515.5px;top:886px;height:40px"><i style="left:50px;top:4px;width:5px;height:1px;background:#9a9a9a"></i><i style="left:35px;top:38px;width:7px;height:1px;background:#9a9a9a"></i><i style="left:46px;top:38px;width:4px;height:1px;background:#9a9a9a"></i><i style="left:0px;top:5px;width:56px;height:29px;background:linear-gradient(90deg,#d6d2ca,#8a8074 22%,#6f6254 36%,#cbc5ba 55%,#b5ab9c 75%,#d0ccc4);filter:brightness(.91)"></i><i style="left:0px;top:29px;width:56px;height:5px;background:#8c8b88"></i></div><div class="n" style="left:517.1px;top:935px;color:#1a1a1a">294</div>
<div class="th" style="left:611.6px;top:886px;height:40px"><i style="left:50px;top:4px;width:5px;height:1px;background:#9a9a9a"></i><i style="left:35px;top:38px;width:7px;height:1px;background:#9a9a9a"></i><i style="left:46px;top:38px;width:4px;height:1px;background:#9a9a9a"></i><i style="left:0px;top:5px;width:40px;height:30px;background:linear-gradient(180deg,#a89c8c,#6f6558 25%,#a39888 50%,#dbd7cf 75%,#8a8074);filter:brightness(.91)"></i><i style="left:40px;top:5px;width:16px;height:30px;background:#8c8b86"></i></div><div class="n" style="left:613.2px;top:935px;color:#1a1a1a">295</div>
<div class="th" style="left:707.7px;top:886px;height:40px"><i style="left:0px;top:0px;width:56px;height:40px;background:linear-gradient(90deg,#7a6c58,#a89c88 22%,#9a8e7a 38%,#5a5046 48%,#5a5046 60%,#9a8e7a 70%,#6f614e);filter:brightness(.91)"></i><i style="left:12px;top:2px;width:32px;height:10px;background:#e2e2e0"></i><i style="left:0px;top:33px;width:56px;height:7px;background:#3c3c3e"></i></div><div class="n" style="left:709.3000000000001px;top:935px;color:#1a1a1a">296</div>
<div class="th" style="left:803.8px;top:886px;height:40px"><i style="left:50px;top:4px;width:5px;height:1px;background:#9a9a9a"></i><i style="left:35px;top:38px;width:7px;height:1px;background:#9a9a9a"></i><i style="left:46px;top:38px;width:4px;height:1px;background:#9a9a9a"></i><i style="left:0px;top:7px;width:37px;height:29px;background:linear-gradient(180deg,#c3beb5,#a8a296 40%,#9a8468 65%,#8f897e);filter:brightness(.91)"></i><i style="left:38px;top:7px;width:18px;height:29px;background:linear-gradient(180deg,#bdb3a2,#cfc7b8 60%,#b0a694);filter:brightness(.91)"></i></div><div class="n" style="left:805.4px;top:935px;color:#1a1a1a">297</div>
<div class="th" style="left:899.9px;top:886px;height:40px"><i style="left:0px;top:0px;width:56px;height:37px;background:linear-gradient(90deg,#a89e8e,#d3cbbd 20%,#cfc7b8 60%,#c3baa9);filter:brightness(.91)"></i></div><div class="n" style="left:901.5px;top:935px;color:#1a1a1a">298</div>
<div class="th" style="left:996.0px;top:886px;height:40px"><i style="left:20px;top:15px;width:4px;height:1px;background:#ccc"></i><i style="left:20px;top:18px;width:7px;height:1px;background:#aaa"></i></div><div class="n" style="left:997.6px;top:935px;color:#1a1a1a">299</div>
<div class="a" style="left:0;top:0;width:1287px;height:994px;overflow:hidden;pointer-events:none">
<div class="a" style="left:-2226px;top:326.5px;width:3200px;height:9px;border-top:1.8px solid rgba(255,255,255,.42);border-bottom:1.8px solid rgba(255,255,255,.42);background:rgba(255,255,255,.17);box-shadow:0 0 4px 1px rgba(255,255,255,.22);filter:blur(.5px);transform:rotate(45.9deg)"></div>
<div class="a" style="left:-1852px;top:326.5px;width:3200px;height:9px;border-top:1.8px solid rgba(255,255,255,.42);border-bottom:1.8px solid rgba(255,255,255,.42);background:rgba(255,255,255,.17);box-shadow:0 0 4px 1px rgba(255,255,255,.22);filter:blur(.5px);transform:rotate(45.9deg)"></div>
<div class="a" style="left:-1478px;top:326.5px;width:3200px;height:9px;border-top:1.8px solid rgba(255,255,255,.42);border-bottom:1.8px solid rgba(255,255,255,.42);background:rgba(255,255,255,.17);box-shadow:0 0 4px 1px rgba(255,255,255,.22);filter:blur(.5px);transform:rotate(45.9deg)"></div>
<div class="a" style="left:-1104px;top:326.5px;width:3200px;height:9px;border-top:1.8px solid rgba(255,255,255,.42);border-bottom:1.8px solid rgba(255,255,255,.42);background:rgba(255,255,255,.17);box-shadow:0 0 4px 1px rgba(255,255,255,.22);filter:blur(.5px);transform:rotate(45.9deg)"></div>
<div class="a" style="left:-730px;top:326.5px;width:3200px;height:9px;border-top:1.8px solid rgba(255,255,255,.42);border-bottom:1.8px solid rgba(255,255,255,.42);background:rgba(255,255,255,.17);box-shadow:0 0 4px 1px rgba(255,255,255,.22);filter:blur(.5px);transform:rotate(45.9deg)"></div>
<div class="a" style="left:-356px;top:326.5px;width:3200px;height:9px;border-top:1.8px solid rgba(255,255,255,.42);border-bottom:1.8px solid rgba(255,255,255,.42);background:rgba(255,255,255,.17);box-shadow:0 0 4px 1px rgba(255,255,255,.22);filter:blur(.5px);transform:rotate(45.9deg)"></div>
<div class="a" style="left:18px;top:326.5px;width:3200px;height:9px;border-top:1.8px solid rgba(255,255,255,.42);border-bottom:1.8px solid rgba(255,255,255,.42);background:rgba(255,255,255,.17);box-shadow:0 0 4px 1px rgba(255,255,255,.22);filter:blur(.5px);transform:rotate(45.9deg)"></div>
<div class="a" style="left:-1852px;top:326.5px;width:3200px;height:9px;border-top:1.8px solid rgba(255,255,255,.42);border-bottom:1.8px solid rgba(255,255,255,.42);background:rgba(255,255,255,.17);box-shadow:0 0 4px 1px rgba(255,255,255,.22);filter:blur(.5px);transform:rotate(-45.9deg)"></div>
<div class="a" style="left:-1478px;top:326.5px;width:3200px;height:9px;border-top:1.8px solid rgba(255,255,255,.42);border-bottom:1.8px solid rgba(255,255,255,.42);background:rgba(255,255,255,.17);box-shadow:0 0 4px 1px rgba(255,255,255,.22);filter:blur(.5px);transform:rotate(-45.9deg)"></div>
<div class="a" style="left:-1104px;top:326.5px;width:3200px;height:9px;border-top:1.8px solid rgba(255,255,255,.42);border-bottom:1.8px solid rgba(255,255,255,.42);background:rgba(255,255,255,.17);box-shadow:0 0 4px 1px rgba(255,255,255,.22);filter:blur(.5px);transform:rotate(-45.9deg)"></div>
<div class="a" style="left:-730px;top:326.5px;width:3200px;height:9px;border-top:1.8px solid rgba(255,255,255,.42);border-bottom:1.8px solid rgba(255,255,255,.42);background:rgba(255,255,255,.17);box-shadow:0 0 4px 1px rgba(255,255,255,.22);filter:blur(.5px);transform:rotate(-45.9deg)"></div>
<div class="a" style="left:-356px;top:326.5px;width:3200px;height:9px;border-top:1.8px solid rgba(255,255,255,.42);border-bottom:1.8px solid rgba(255,255,255,.42);background:rgba(255,255,255,.17);box-shadow:0 0 4px 1px rgba(255,255,255,.22);filter:blur(.5px);transform:rotate(-45.9deg)"></div>
<div class="a" style="left:18px;top:326.5px;width:3200px;height:9px;border-top:1.8px solid rgba(255,255,255,.42);border-bottom:1.8px solid rgba(255,255,255,.42);background:rgba(255,255,255,.17);box-shadow:0 0 4px 1px rgba(255,255,255,.22);filter:blur(.5px);transform:rotate(-45.9deg)"></div>
<div class="wm" style="left:62px;top:292px;width:120px;text-align:center;font-size:27px;line-height:40px;font-weight:700;opacity:.4;transform:rotate(45.9deg);letter-spacing:.5px">yitu.cn</div>
<div class="wm" style="left:436px;top:311px;width:120px;text-align:center;font-size:27px;line-height:40px;font-weight:700;opacity:.4;transform:rotate(-45.9deg);letter-spacing:.5px">yitu.cn</div>
<div class="wm" style="left:810px;top:314px;width:120px;text-align:center;font-size:27px;line-height:40px;font-weight:700;opacity:.4;transform:rotate(45.9deg);letter-spacing:.5px">yitu.cn</div>
<div class="wm" style="left:1184px;top:325px;width:120px;text-align:center;font-size:27px;line-height:40px;font-weight:700;opacity:.4;transform:rotate(-45.9deg);letter-spacing:.5px">yitu.cn</div>
<div class="wm" style="left:249px;top:504px;width:120px;text-align:center;font-size:27px;line-height:40px;font-weight:700;opacity:.4;transform:rotate(-45.9deg);letter-spacing:.5px">yitu.cn</div>
<div class="wm" style="left:623px;top:515px;width:120px;text-align:center;font-size:27px;line-height:40px;font-weight:700;opacity:.4;transform:rotate(45.9deg);letter-spacing:.5px">yitu.cn</div>
<div class="wm" style="left:997px;top:504px;width:120px;text-align:center;font-size:27px;line-height:40px;font-weight:700;opacity:.4;transform:rotate(-45.9deg);letter-spacing:.5px">yitu.cn</div>
<div class="wm" style="left:62px;top:697px;width:120px;text-align:center;font-size:27px;line-height:40px;font-weight:700;opacity:.4;transform:rotate(-45.9deg);letter-spacing:.5px">yitu.cn</div>
<div class="wm" style="left:436px;top:697px;width:120px;text-align:center;font-size:27px;line-height:40px;font-weight:700;opacity:.4;transform:rotate(45.9deg);letter-spacing:.5px">yitu.cn</div>
<div class="wm" style="left:810px;top:697px;width:120px;text-align:center;font-size:27px;line-height:40px;font-weight:700;opacity:.4;transform:rotate(-45.9deg);letter-spacing:.5px">yitu.cn</div>
<div class="wm" style="left:1184px;top:700px;width:120px;text-align:center;font-size:27px;line-height:40px;font-weight:700;opacity:.4;transform:rotate(45.9deg);letter-spacing:.5px">yitu.cn</div>
<div class="wm" style="left:249px;top:890px;width:120px;text-align:center;font-size:27px;line-height:40px;font-weight:700;opacity:.4;transform:rotate(45.9deg);letter-spacing:.5px">yitu.cn</div>
<div class="wm" style="left:623px;top:890px;width:120px;text-align:center;font-size:27px;line-height:40px;font-weight:700;opacity:.4;transform:rotate(-45.9deg);letter-spacing:.5px">yitu.cn</div>
<div class="wm" style="left:997px;top:895px;width:120px;text-align:center;font-size:27px;line-height:40px;font-weight:700;opacity:.4;transform:rotate(45.9deg);letter-spacing:.5px">yitu.cn</div>
<div class="wm" style="left:249px;top:118px;width:120px;text-align:center;font-size:27px;line-height:40px;font-weight:700;opacity:.4;transform:rotate(45.9deg);letter-spacing:.5px">yitu.cn</div>
<div class="wm" style="left:623px;top:118px;width:120px;text-align:center;font-size:27px;line-height:40px;font-weight:700;opacity:.4;transform:rotate(-45.9deg);letter-spacing:.5px">yitu.cn</div>
<div class="wm" style="left:997px;top:118px;width:120px;text-align:center;font-size:27px;line-height:40px;font-weight:700;opacity:.4;transform:rotate(45.9deg);letter-spacing:.5px">yitu.cn</div>
<div class="wm" style="left:90px;top:96px;width:60px;text-align:center;font-size:53px;line-height:60px;font-weight:700;opacity:.47;text-shadow:0 0 6px rgba(0,0,0,.2)">易</div>
<div class="wm" style="left:469px;top:115px;width:60px;text-align:center;font-size:53px;line-height:60px;font-weight:700;opacity:.47;text-shadow:0 0 6px rgba(0,0,0,.2)">易</div>
<div class="wm" style="left:837px;top:117px;width:60px;text-align:center;font-size:53px;line-height:60px;font-weight:700;opacity:.47;text-shadow:0 0 6px rgba(0,0,0,.2)">易</div>
<div class="wm" style="left:1215px;top:119px;width:60px;text-align:center;font-size:53px;line-height:60px;font-weight:700;opacity:.47;text-shadow:0 0 6px rgba(0,0,0,.2)">易</div>
<div class="wm" style="left:281px;top:313px;width:60px;text-align:center;font-size:53px;line-height:60px;font-weight:700;opacity:.47;text-shadow:0 0 6px rgba(0,0,0,.2)">易</div>
<div class="wm" style="left:654px;top:317px;width:60px;text-align:center;font-size:53px;line-height:60px;font-weight:700;opacity:.47;text-shadow:0 0 6px rgba(0,0,0,.2)">易</div>
<div class="wm" style="left:1026px;top:318px;width:60px;text-align:center;font-size:53px;line-height:60px;font-weight:700;opacity:.47;text-shadow:0 0 6px rgba(0,0,0,.2)">易</div>
<div class="wm" style="left:88px;top:490px;width:60px;text-align:center;font-size:53px;line-height:60px;font-weight:700;opacity:.47;text-shadow:0 0 6px rgba(0,0,0,.2)">易</div>
<div class="wm" style="left:468px;top:511px;width:60px;text-align:center;font-size:53px;line-height:60px;font-weight:700;opacity:.47;text-shadow:0 0 6px rgba(0,0,0,.2)">易</div>
<div class="wm" style="left:837px;top:516px;width:60px;text-align:center;font-size:53px;line-height:60px;font-weight:700;opacity:.47;text-shadow:0 0 6px rgba(0,0,0,.2)">易</div>
<div class="wm" style="left:1211px;top:512px;width:60px;text-align:center;font-size:53px;line-height:60px;font-weight:700;opacity:.47;text-shadow:0 0 6px rgba(0,0,0,.2)">易</div>
<div class="wm" style="left:273px;top:694px;width:60px;text-align:center;font-size:53px;line-height:60px;font-weight:700;opacity:.47;text-shadow:0 0 6px rgba(0,0,0,.2)">易</div>
<div class="wm" style="left:654px;top:698px;width:60px;text-align:center;font-size:53px;line-height:60px;font-weight:700;opacity:.47;text-shadow:0 0 6px rgba(0,0,0,.2)">易</div>
<div class="wm" style="left:1020px;top:706px;width:60px;text-align:center;font-size:53px;line-height:60px;font-weight:700;opacity:.47;text-shadow:0 0 6px rgba(0,0,0,.2)">易</div>
<div class="wm" style="left:92px;top:875px;width:60px;text-align:center;font-size:53px;line-height:60px;font-weight:700;opacity:.47;text-shadow:0 0 6px rgba(0,0,0,.2)">易</div>
<div class="wm" style="left:467px;top:897px;width:60px;text-align:center;font-size:53px;line-height:60px;font-weight:700;opacity:.47;text-shadow:0 0 6px rgba(0,0,0,.2)">易</div>
<div class="wm" style="left:842px;top:897px;width:60px;text-align:center;font-size:53px;line-height:60px;font-weight:700;opacity:.47;text-shadow:0 0 6px rgba(0,0,0,.2)">易</div>
<div class="wm" style="left:1213px;top:897px;width:60px;text-align:center;font-size:53px;line-height:60px;font-weight:700;opacity:.47;text-shadow:0 0 6px rgba(0,0,0,.2)">易</div>
<div class="wm" style="left:962px;top:802px;font-size:72px;line-height:88px;font-weight:900;letter-spacing:11px;opacity:.52;font-family:'Noto Sans CJK SC',sans-serif;text-shadow:0 0 8px rgba(0,0,0,.28)">易图网</div>
</div>
</body></html>
